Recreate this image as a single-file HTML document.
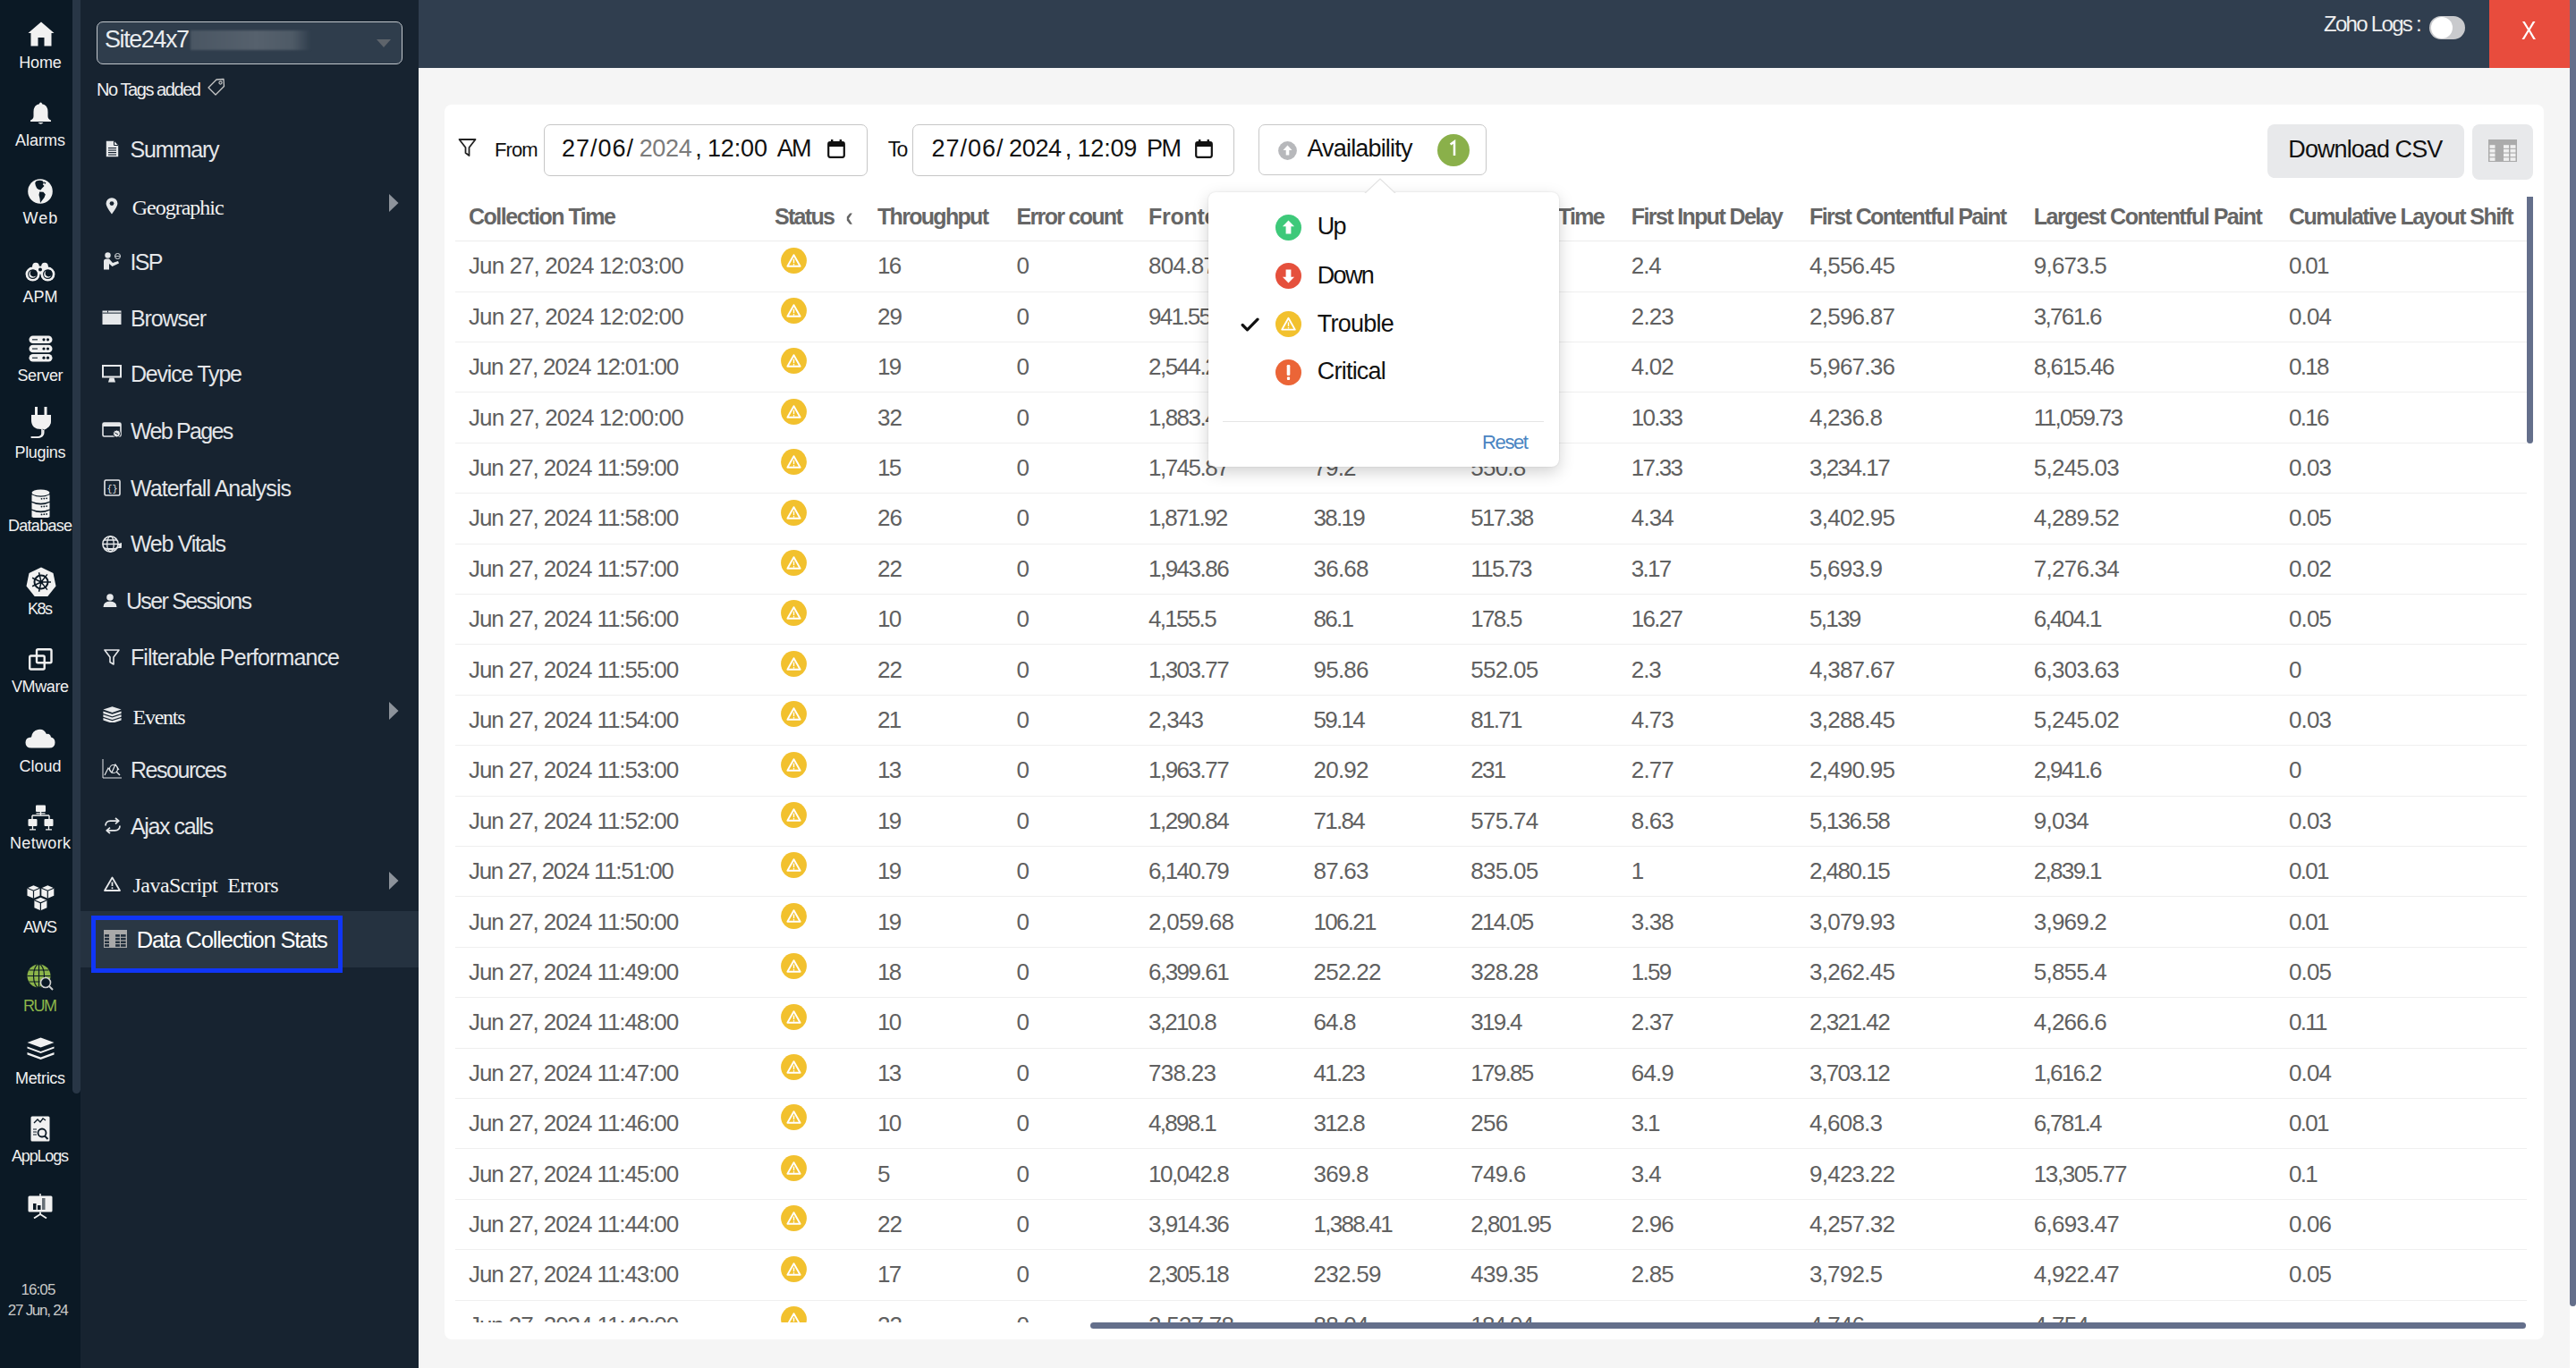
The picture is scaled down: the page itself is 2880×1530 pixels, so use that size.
<!DOCTYPE html>
<html><head><meta charset="utf-8"><title>Data Collection Stats</title>
<style>
html,body{margin:0;padding:0;}
body{width:2880px;height:1530px;overflow:hidden;position:relative;background:#f5f5f5;font-family:'Liberation Sans', sans-serif;}
.t{position:absolute;white-space:nowrap;}
</style></head><body>
<div style="position:absolute;left:0px;top:0px;width:81px;height:1530px;background:#0b1925"></div>
<div style="position:absolute;left:81px;top:0px;width:9px;height:1530px;background:#0b1925"></div>
<div style="position:absolute;left:81px;top:0px;width:9px;height:1223px;background:#283646;border-radius:0 0 5px 5px"></div>
<div style="position:absolute;left:90px;top:0px;width:378px;height:1530px;background:#172330"></div>
<div style="position:absolute;left:468px;top:0px;width:2405px;height:76px;background:#303e4f"></div>
<div style="position:absolute;left:2783px;top:0px;width:90px;height:76px;background:#e84c3d"></div>
<div style="position:absolute;left:2873px;top:0px;width:7px;height:1530px;background:#ffffff"></div>
<div style="position:absolute;left:2873px;top:0px;width:7px;height:1461px;background:#646f8b;border-radius:0 0 4px 4px"></div>
<div style="position:absolute;left:468px;top:76px;width:2405px;height:1454px;background:#f5f5f5"></div>
<div style="position:absolute;left:468px;top:76px;width:1px;height:1454px;background:#ffffff"></div>
<div style="position:absolute;left:497px;top:117px;width:2347px;height:1381px;background:#ffffff;border-radius:8px"></div>
<div style="position:absolute;left:0;top:0;width:2880px;height:1479px;overflow:hidden">
<div style="position:absolute;left:509px;top:269px;width:2316px;height:1px;background:#ececec"></div>
<div class="t" style="left:524.00px;top:230.15px;font-size:25px;line-height:25px;color:#666666;font-weight:700;font-family:'Liberation Sans', sans-serif;letter-spacing:-1.478px;">Collection Time</div>
<div class="t" style="left:866.00px;top:230.15px;font-size:25px;line-height:25px;color:#666666;font-weight:700;font-family:'Liberation Sans', sans-serif;letter-spacing:-1.700px;">Status</div>
<div class="t" style="left:981.00px;top:230.15px;font-size:25px;line-height:25px;color:#666666;font-weight:700;font-family:'Liberation Sans', sans-serif;letter-spacing:-1.693px;">Throughput</div>
<div class="t" style="left:1136.60px;top:230.15px;font-size:25px;line-height:25px;color:#666666;font-weight:700;font-family:'Liberation Sans', sans-serif;letter-spacing:-1.700px;">Error count</div>
<div class="t" style="left:1284.00px;top:230.15px;font-size:25px;line-height:25px;color:#666666;font-weight:700;font-family:'Liberation Sans', sans-serif;letter-spacing:-0.264px;">Frontend Time</div>
<div class="t" style="left:1468.50px;top:230.15px;font-size:25px;line-height:25px;color:#666666;font-weight:700;font-family:'Liberation Sans', sans-serif;letter-spacing:-1.226px;">Network Time</div>
<div class="t" style="left:1644.30px;top:230.15px;font-size:25px;line-height:25px;color:#666666;font-weight:700;font-family:'Liberation Sans', sans-serif;letter-spacing:-1.700px;">Backend Time</div>
<div class="t" style="left:1823.80px;top:230.15px;font-size:25px;line-height:25px;color:#666666;font-weight:700;font-family:'Liberation Sans', sans-serif;letter-spacing:-1.617px;">First Input Delay</div>
<div class="t" style="left:2023.00px;top:230.15px;font-size:25px;line-height:25px;color:#666666;font-weight:700;font-family:'Liberation Sans', sans-serif;letter-spacing:-1.579px;">First Contentful Paint</div>
<div class="t" style="left:2273.80px;top:230.15px;font-size:25px;line-height:25px;color:#666666;font-weight:700;font-family:'Liberation Sans', sans-serif;letter-spacing:-1.491px;">Largest Contentful Paint</div>
<div class="t" style="left:2559.00px;top:230.15px;font-size:25px;line-height:25px;color:#666666;font-weight:700;font-family:'Liberation Sans', sans-serif;letter-spacing:-1.570px;">Cumulative Layout Shift</div>
<svg style="position:absolute;left:946px;top:237px;" width="8" height="15" viewBox="0 0 8 15"><path d="M4.2 1.4 H6.9 L2.9 7.5 L6.9 13.8 H4.2 L0.8 9.5 V5.5 Z" fill="#666"/></svg>
<div style="position:absolute;left:509px;top:326px;width:2316px;height:1px;background:#efefef"></div>
<div class="t" style="left:524.00px;top:284.30px;font-size:26px;line-height:26px;color:#606060;font-weight:400;font-family:'Liberation Sans', sans-serif;letter-spacing:-0.909px;">Jun 27, 2024 12:03:00</div>
<svg style="position:absolute;left:873px;top:277px;" width="29" height="29" viewBox="0 0 29 29"><circle cx="14.5" cy="14.5" r="14.4" fill="#f2c12e"/><path d="M14.5 8.2 L21.6 20.8 L7.4 20.8 Z" fill="none" stroke="#fff" stroke-width="1.9" stroke-linejoin="round"/><path d="M14.5 12.6 V17.2" stroke="#fff" stroke-width="1.4"/><circle cx="14.5" cy="18.9" r="0.8" fill="#fff"/></svg>
<div class="t" style="left:981.00px;top:284.30px;font-size:26px;line-height:26px;color:#606060;font-weight:400;font-family:'Liberation Sans', sans-serif;letter-spacing:-1.700px;">16</div>
<div class="t" style="left:1136.60px;top:284.30px;font-size:26px;line-height:26px;color:#606060;font-weight:400;font-family:'Liberation Sans', sans-serif;letter-spacing:0px;">0</div>
<div class="t" style="left:1284.00px;top:284.30px;font-size:26px;line-height:26px;color:#606060;font-weight:400;font-family:'Liberation Sans', sans-serif;letter-spacing:-0.706px;">804.87</div>
<div class="t" style="left:1468.50px;top:284.30px;font-size:26px;line-height:26px;color:#606060;font-weight:400;font-family:'Liberation Sans', sans-serif;letter-spacing:-1.700px;">41.2</div>
<div class="t" style="left:1644.30px;top:284.30px;font-size:26px;line-height:26px;color:#606060;font-weight:400;font-family:'Liberation Sans', sans-serif;letter-spacing:-1.700px;">212.4</div>
<div class="t" style="left:1823.80px;top:284.30px;font-size:26px;line-height:26px;color:#606060;font-weight:400;font-family:'Liberation Sans', sans-serif;letter-spacing:-1.078px;">2.4</div>
<div class="t" style="left:2023.00px;top:284.30px;font-size:26px;line-height:26px;color:#606060;font-weight:400;font-family:'Liberation Sans', sans-serif;letter-spacing:-0.746px;">4,556.45</div>
<div class="t" style="left:2273.80px;top:284.30px;font-size:26px;line-height:26px;color:#606060;font-weight:400;font-family:'Liberation Sans', sans-serif;letter-spacing:-0.792px;">9,673.5</div>
<div class="t" style="left:2559.00px;top:284.30px;font-size:26px;line-height:26px;color:#606060;font-weight:400;font-family:'Liberation Sans', sans-serif;letter-spacing:-1.700px;">0.01</div>
<div style="position:absolute;left:509px;top:382px;width:2316px;height:1px;background:#efefef"></div>
<div class="t" style="left:524.00px;top:340.70px;font-size:26px;line-height:26px;color:#606060;font-weight:400;font-family:'Liberation Sans', sans-serif;letter-spacing:-0.909px;">Jun 27, 2024 12:02:00</div>
<svg style="position:absolute;left:873px;top:333px;" width="29" height="29" viewBox="0 0 29 29"><circle cx="14.5" cy="14.5" r="14.4" fill="#f2c12e"/><path d="M14.5 8.2 L21.6 20.8 L7.4 20.8 Z" fill="none" stroke="#fff" stroke-width="1.9" stroke-linejoin="round"/><path d="M14.5 12.6 V17.2" stroke="#fff" stroke-width="1.4"/><circle cx="14.5" cy="18.9" r="0.8" fill="#fff"/></svg>
<div class="t" style="left:981.00px;top:340.70px;font-size:26px;line-height:26px;color:#606060;font-weight:400;font-family:'Liberation Sans', sans-serif;letter-spacing:-0.922px;">29</div>
<div class="t" style="left:1136.60px;top:340.70px;font-size:26px;line-height:26px;color:#606060;font-weight:400;font-family:'Liberation Sans', sans-serif;letter-spacing:0px;">0</div>
<div class="t" style="left:1284.00px;top:340.70px;font-size:26px;line-height:26px;color:#606060;font-weight:400;font-family:'Liberation Sans', sans-serif;letter-spacing:-1.700px;">941.55</div>
<div class="t" style="left:1468.50px;top:340.70px;font-size:26px;line-height:26px;color:#606060;font-weight:400;font-family:'Liberation Sans', sans-serif;letter-spacing:-1.700px;">52.18</div>
<div class="t" style="left:1644.30px;top:340.70px;font-size:26px;line-height:26px;color:#606060;font-weight:400;font-family:'Liberation Sans', sans-serif;letter-spacing:-0.770px;">320.6</div>
<div class="t" style="left:1823.80px;top:340.70px;font-size:26px;line-height:26px;color:#606060;font-weight:400;font-family:'Liberation Sans', sans-serif;letter-spacing:-0.870px;">2.23</div>
<div class="t" style="left:2023.00px;top:340.70px;font-size:26px;line-height:26px;color:#606060;font-weight:400;font-family:'Liberation Sans', sans-serif;letter-spacing:-0.746px;">2,596.87</div>
<div class="t" style="left:2273.80px;top:340.70px;font-size:26px;line-height:26px;color:#606060;font-weight:400;font-family:'Liberation Sans', sans-serif;letter-spacing:-1.692px;">3,761.6</div>
<div class="t" style="left:2559.00px;top:340.70px;font-size:26px;line-height:26px;color:#606060;font-weight:400;font-family:'Liberation Sans', sans-serif;letter-spacing:-0.870px;">0.04</div>
<div style="position:absolute;left:509px;top:438px;width:2316px;height:1px;background:#efefef"></div>
<div class="t" style="left:524.00px;top:397.10px;font-size:26px;line-height:26px;color:#606060;font-weight:400;font-family:'Liberation Sans', sans-serif;letter-spacing:-1.179px;">Jun 27, 2024 12:01:00</div>
<svg style="position:absolute;left:873px;top:389px;" width="29" height="29" viewBox="0 0 29 29"><circle cx="14.5" cy="14.5" r="14.4" fill="#f2c12e"/><path d="M14.5 8.2 L21.6 20.8 L7.4 20.8 Z" fill="none" stroke="#fff" stroke-width="1.9" stroke-linejoin="round"/><path d="M14.5 12.6 V17.2" stroke="#fff" stroke-width="1.4"/><circle cx="14.5" cy="18.9" r="0.8" fill="#fff"/></svg>
<div class="t" style="left:981.00px;top:397.10px;font-size:26px;line-height:26px;color:#606060;font-weight:400;font-family:'Liberation Sans', sans-serif;letter-spacing:-1.700px;">19</div>
<div class="t" style="left:1136.60px;top:397.10px;font-size:26px;line-height:26px;color:#606060;font-weight:400;font-family:'Liberation Sans', sans-serif;letter-spacing:0px;">0</div>
<div class="t" style="left:1284.00px;top:397.10px;font-size:26px;line-height:26px;color:#606060;font-weight:400;font-family:'Liberation Sans', sans-serif;letter-spacing:-1.517px;">2,544.21</div>
<div class="t" style="left:1468.50px;top:397.10px;font-size:26px;line-height:26px;color:#606060;font-weight:400;font-family:'Liberation Sans', sans-serif;letter-spacing:-0.770px;">63.47</div>
<div class="t" style="left:1644.30px;top:397.10px;font-size:26px;line-height:26px;color:#606060;font-weight:400;font-family:'Liberation Sans', sans-serif;letter-spacing:-1.700px;">418.9</div>
<div class="t" style="left:1823.80px;top:397.10px;font-size:26px;line-height:26px;color:#606060;font-weight:400;font-family:'Liberation Sans', sans-serif;letter-spacing:-0.870px;">4.02</div>
<div class="t" style="left:2023.00px;top:397.10px;font-size:26px;line-height:26px;color:#606060;font-weight:400;font-family:'Liberation Sans', sans-serif;letter-spacing:-0.746px;">5,967.36</div>
<div class="t" style="left:2273.80px;top:397.10px;font-size:26px;line-height:26px;color:#606060;font-weight:400;font-family:'Liberation Sans', sans-serif;letter-spacing:-1.517px;">8,615.46</div>
<div class="t" style="left:2559.00px;top:397.10px;font-size:26px;line-height:26px;color:#606060;font-weight:400;font-family:'Liberation Sans', sans-serif;letter-spacing:-1.700px;">0.18</div>
<div style="position:absolute;left:509px;top:495px;width:2316px;height:1px;background:#efefef"></div>
<div class="t" style="left:524.00px;top:453.50px;font-size:26px;line-height:26px;color:#606060;font-weight:400;font-family:'Liberation Sans', sans-serif;letter-spacing:-0.909px;">Jun 27, 2024 12:00:00</div>
<svg style="position:absolute;left:873px;top:446px;" width="29" height="29" viewBox="0 0 29 29"><circle cx="14.5" cy="14.5" r="14.4" fill="#f2c12e"/><path d="M14.5 8.2 L21.6 20.8 L7.4 20.8 Z" fill="none" stroke="#fff" stroke-width="1.9" stroke-linejoin="round"/><path d="M14.5 12.6 V17.2" stroke="#fff" stroke-width="1.4"/><circle cx="14.5" cy="18.9" r="0.8" fill="#fff"/></svg>
<div class="t" style="left:981.00px;top:453.50px;font-size:26px;line-height:26px;color:#606060;font-weight:400;font-family:'Liberation Sans', sans-serif;letter-spacing:-0.922px;">32</div>
<div class="t" style="left:1136.60px;top:453.50px;font-size:26px;line-height:26px;color:#606060;font-weight:400;font-family:'Liberation Sans', sans-serif;letter-spacing:0px;">0</div>
<div class="t" style="left:1284.00px;top:453.50px;font-size:26px;line-height:26px;color:#606060;font-weight:400;font-family:'Liberation Sans', sans-serif;letter-spacing:-1.517px;">1,883.45</div>
<div class="t" style="left:1468.50px;top:453.50px;font-size:26px;line-height:26px;color:#606060;font-weight:400;font-family:'Liberation Sans', sans-serif;letter-spacing:-0.770px;">48.03</div>
<div class="t" style="left:1644.30px;top:453.50px;font-size:26px;line-height:26px;color:#606060;font-weight:400;font-family:'Liberation Sans', sans-serif;letter-spacing:-1.700px;">276.1</div>
<div class="t" style="left:1823.80px;top:453.50px;font-size:26px;line-height:26px;color:#606060;font-weight:400;font-family:'Liberation Sans', sans-serif;letter-spacing:-1.700px;">10.33</div>
<div class="t" style="left:2023.00px;top:453.50px;font-size:26px;line-height:26px;color:#606060;font-weight:400;font-family:'Liberation Sans', sans-serif;letter-spacing:-0.792px;">4,236.8</div>
<div class="t" style="left:2273.80px;top:453.50px;font-size:26px;line-height:26px;color:#606060;font-weight:400;font-family:'Liberation Sans', sans-serif;letter-spacing:-1.700px;">11,059.73</div>
<div class="t" style="left:2559.00px;top:453.50px;font-size:26px;line-height:26px;color:#606060;font-weight:400;font-family:'Liberation Sans', sans-serif;letter-spacing:-1.700px;">0.16</div>
<div style="position:absolute;left:509px;top:551px;width:2316px;height:1px;background:#efefef"></div>
<div class="t" style="left:524.00px;top:509.90px;font-size:26px;line-height:26px;color:#606060;font-weight:400;font-family:'Liberation Sans', sans-serif;letter-spacing:-1.083px;">Jun 27, 2024 11:59:00</div>
<svg style="position:absolute;left:873px;top:502px;" width="29" height="29" viewBox="0 0 29 29"><circle cx="14.5" cy="14.5" r="14.4" fill="#f2c12e"/><path d="M14.5 8.2 L21.6 20.8 L7.4 20.8 Z" fill="none" stroke="#fff" stroke-width="1.9" stroke-linejoin="round"/><path d="M14.5 12.6 V17.2" stroke="#fff" stroke-width="1.4"/><circle cx="14.5" cy="18.9" r="0.8" fill="#fff"/></svg>
<div class="t" style="left:981.00px;top:509.90px;font-size:26px;line-height:26px;color:#606060;font-weight:400;font-family:'Liberation Sans', sans-serif;letter-spacing:-1.700px;">15</div>
<div class="t" style="left:1136.60px;top:509.90px;font-size:26px;line-height:26px;color:#606060;font-weight:400;font-family:'Liberation Sans', sans-serif;letter-spacing:0px;">0</div>
<div class="t" style="left:1284.00px;top:509.90px;font-size:26px;line-height:26px;color:#606060;font-weight:400;font-family:'Liberation Sans', sans-serif;letter-spacing:-1.517px;">1,745.87</div>
<div class="t" style="left:1468.50px;top:509.90px;font-size:26px;line-height:26px;color:#606060;font-weight:400;font-family:'Liberation Sans', sans-serif;letter-spacing:-0.870px;">79.2</div>
<div class="t" style="left:1644.30px;top:509.90px;font-size:26px;line-height:26px;color:#606060;font-weight:400;font-family:'Liberation Sans', sans-serif;letter-spacing:-0.770px;">550.8</div>
<div class="t" style="left:1823.80px;top:509.90px;font-size:26px;line-height:26px;color:#606060;font-weight:400;font-family:'Liberation Sans', sans-serif;letter-spacing:-1.700px;">17.33</div>
<div class="t" style="left:2023.00px;top:509.90px;font-size:26px;line-height:26px;color:#606060;font-weight:400;font-family:'Liberation Sans', sans-serif;letter-spacing:-1.517px;">3,234.17</div>
<div class="t" style="left:2273.80px;top:509.90px;font-size:26px;line-height:26px;color:#606060;font-weight:400;font-family:'Liberation Sans', sans-serif;letter-spacing:-0.746px;">5,245.03</div>
<div class="t" style="left:2559.00px;top:509.90px;font-size:26px;line-height:26px;color:#606060;font-weight:400;font-family:'Liberation Sans', sans-serif;letter-spacing:-0.870px;">0.03</div>
<div style="position:absolute;left:509px;top:608px;width:2316px;height:1px;background:#efefef"></div>
<div class="t" style="left:524.00px;top:566.30px;font-size:26px;line-height:26px;color:#606060;font-weight:400;font-family:'Liberation Sans', sans-serif;letter-spacing:-1.083px;">Jun 27, 2024 11:58:00</div>
<svg style="position:absolute;left:873px;top:559px;" width="29" height="29" viewBox="0 0 29 29"><circle cx="14.5" cy="14.5" r="14.4" fill="#f2c12e"/><path d="M14.5 8.2 L21.6 20.8 L7.4 20.8 Z" fill="none" stroke="#fff" stroke-width="1.9" stroke-linejoin="round"/><path d="M14.5 12.6 V17.2" stroke="#fff" stroke-width="1.4"/><circle cx="14.5" cy="18.9" r="0.8" fill="#fff"/></svg>
<div class="t" style="left:981.00px;top:566.30px;font-size:26px;line-height:26px;color:#606060;font-weight:400;font-family:'Liberation Sans', sans-serif;letter-spacing:-0.922px;">26</div>
<div class="t" style="left:1136.60px;top:566.30px;font-size:26px;line-height:26px;color:#606060;font-weight:400;font-family:'Liberation Sans', sans-serif;letter-spacing:0px;">0</div>
<div class="t" style="left:1284.00px;top:566.30px;font-size:26px;line-height:26px;color:#606060;font-weight:400;font-family:'Liberation Sans', sans-serif;letter-spacing:-1.700px;">1,871.92</div>
<div class="t" style="left:1468.50px;top:566.30px;font-size:26px;line-height:26px;color:#606060;font-weight:400;font-family:'Liberation Sans', sans-serif;letter-spacing:-1.700px;">38.19</div>
<div class="t" style="left:1644.30px;top:566.30px;font-size:26px;line-height:26px;color:#606060;font-weight:400;font-family:'Liberation Sans', sans-serif;letter-spacing:-1.700px;">517.38</div>
<div class="t" style="left:1823.80px;top:566.30px;font-size:26px;line-height:26px;color:#606060;font-weight:400;font-family:'Liberation Sans', sans-serif;letter-spacing:-0.870px;">4.34</div>
<div class="t" style="left:2023.00px;top:566.30px;font-size:26px;line-height:26px;color:#606060;font-weight:400;font-family:'Liberation Sans', sans-serif;letter-spacing:-0.746px;">3,402.95</div>
<div class="t" style="left:2273.80px;top:566.30px;font-size:26px;line-height:26px;color:#606060;font-weight:400;font-family:'Liberation Sans', sans-serif;letter-spacing:-0.746px;">4,289.52</div>
<div class="t" style="left:2559.00px;top:566.30px;font-size:26px;line-height:26px;color:#606060;font-weight:400;font-family:'Liberation Sans', sans-serif;letter-spacing:-0.870px;">0.05</div>
<div style="position:absolute;left:509px;top:664px;width:2316px;height:1px;background:#efefef"></div>
<div class="t" style="left:524.00px;top:622.70px;font-size:26px;line-height:26px;color:#606060;font-weight:400;font-family:'Liberation Sans', sans-serif;letter-spacing:-1.083px;">Jun 27, 2024 11:57:00</div>
<svg style="position:absolute;left:873px;top:615px;" width="29" height="29" viewBox="0 0 29 29"><circle cx="14.5" cy="14.5" r="14.4" fill="#f2c12e"/><path d="M14.5 8.2 L21.6 20.8 L7.4 20.8 Z" fill="none" stroke="#fff" stroke-width="1.9" stroke-linejoin="round"/><path d="M14.5 12.6 V17.2" stroke="#fff" stroke-width="1.4"/><circle cx="14.5" cy="18.9" r="0.8" fill="#fff"/></svg>
<div class="t" style="left:981.00px;top:622.70px;font-size:26px;line-height:26px;color:#606060;font-weight:400;font-family:'Liberation Sans', sans-serif;letter-spacing:-0.922px;">22</div>
<div class="t" style="left:1136.60px;top:622.70px;font-size:26px;line-height:26px;color:#606060;font-weight:400;font-family:'Liberation Sans', sans-serif;letter-spacing:0px;">0</div>
<div class="t" style="left:1284.00px;top:622.70px;font-size:26px;line-height:26px;color:#606060;font-weight:400;font-family:'Liberation Sans', sans-serif;letter-spacing:-1.517px;">1,943.86</div>
<div class="t" style="left:1468.50px;top:622.70px;font-size:26px;line-height:26px;color:#606060;font-weight:400;font-family:'Liberation Sans', sans-serif;letter-spacing:-0.770px;">36.68</div>
<div class="t" style="left:1644.30px;top:622.70px;font-size:26px;line-height:26px;color:#606060;font-weight:400;font-family:'Liberation Sans', sans-serif;letter-spacing:-1.700px;">115.73</div>
<div class="t" style="left:1823.80px;top:622.70px;font-size:26px;line-height:26px;color:#606060;font-weight:400;font-family:'Liberation Sans', sans-serif;letter-spacing:-1.700px;">3.17</div>
<div class="t" style="left:2023.00px;top:622.70px;font-size:26px;line-height:26px;color:#606060;font-weight:400;font-family:'Liberation Sans', sans-serif;letter-spacing:-0.792px;">5,693.9</div>
<div class="t" style="left:2273.80px;top:622.70px;font-size:26px;line-height:26px;color:#606060;font-weight:400;font-family:'Liberation Sans', sans-serif;letter-spacing:-0.746px;">7,276.34</div>
<div class="t" style="left:2559.00px;top:622.70px;font-size:26px;line-height:26px;color:#606060;font-weight:400;font-family:'Liberation Sans', sans-serif;letter-spacing:-0.870px;">0.02</div>
<div style="position:absolute;left:509px;top:720px;width:2316px;height:1px;background:#efefef"></div>
<div class="t" style="left:524.00px;top:679.10px;font-size:26px;line-height:26px;color:#606060;font-weight:400;font-family:'Liberation Sans', sans-serif;letter-spacing:-1.083px;">Jun 27, 2024 11:56:00</div>
<svg style="position:absolute;left:873px;top:671px;" width="29" height="29" viewBox="0 0 29 29"><circle cx="14.5" cy="14.5" r="14.4" fill="#f2c12e"/><path d="M14.5 8.2 L21.6 20.8 L7.4 20.8 Z" fill="none" stroke="#fff" stroke-width="1.9" stroke-linejoin="round"/><path d="M14.5 12.6 V17.2" stroke="#fff" stroke-width="1.4"/><circle cx="14.5" cy="18.9" r="0.8" fill="#fff"/></svg>
<div class="t" style="left:981.00px;top:679.10px;font-size:26px;line-height:26px;color:#606060;font-weight:400;font-family:'Liberation Sans', sans-serif;letter-spacing:-1.700px;">10</div>
<div class="t" style="left:1136.60px;top:679.10px;font-size:26px;line-height:26px;color:#606060;font-weight:400;font-family:'Liberation Sans', sans-serif;letter-spacing:0px;">0</div>
<div class="t" style="left:1284.00px;top:679.10px;font-size:26px;line-height:26px;color:#606060;font-weight:400;font-family:'Liberation Sans', sans-serif;letter-spacing:-1.692px;">4,155.5</div>
<div class="t" style="left:1468.50px;top:679.10px;font-size:26px;line-height:26px;color:#606060;font-weight:400;font-family:'Liberation Sans', sans-serif;letter-spacing:-1.700px;">86.1</div>
<div class="t" style="left:1644.30px;top:679.10px;font-size:26px;line-height:26px;color:#606060;font-weight:400;font-family:'Liberation Sans', sans-serif;letter-spacing:-1.700px;">178.5</div>
<div class="t" style="left:1823.80px;top:679.10px;font-size:26px;line-height:26px;color:#606060;font-weight:400;font-family:'Liberation Sans', sans-serif;letter-spacing:-1.700px;">16.27</div>
<div class="t" style="left:2023.00px;top:679.10px;font-size:26px;line-height:26px;color:#606060;font-weight:400;font-family:'Liberation Sans', sans-serif;letter-spacing:-1.700px;">5,139</div>
<div class="t" style="left:2273.80px;top:679.10px;font-size:26px;line-height:26px;color:#606060;font-weight:400;font-family:'Liberation Sans', sans-serif;letter-spacing:-1.692px;">6,404.1</div>
<div class="t" style="left:2559.00px;top:679.10px;font-size:26px;line-height:26px;color:#606060;font-weight:400;font-family:'Liberation Sans', sans-serif;letter-spacing:-0.870px;">0.05</div>
<div style="position:absolute;left:509px;top:777px;width:2316px;height:1px;background:#efefef"></div>
<div class="t" style="left:524.00px;top:735.50px;font-size:26px;line-height:26px;color:#606060;font-weight:400;font-family:'Liberation Sans', sans-serif;letter-spacing:-1.083px;">Jun 27, 2024 11:55:00</div>
<svg style="position:absolute;left:873px;top:728px;" width="29" height="29" viewBox="0 0 29 29"><circle cx="14.5" cy="14.5" r="14.4" fill="#f2c12e"/><path d="M14.5 8.2 L21.6 20.8 L7.4 20.8 Z" fill="none" stroke="#fff" stroke-width="1.9" stroke-linejoin="round"/><path d="M14.5 12.6 V17.2" stroke="#fff" stroke-width="1.4"/><circle cx="14.5" cy="18.9" r="0.8" fill="#fff"/></svg>
<div class="t" style="left:981.00px;top:735.50px;font-size:26px;line-height:26px;color:#606060;font-weight:400;font-family:'Liberation Sans', sans-serif;letter-spacing:-0.922px;">22</div>
<div class="t" style="left:1136.60px;top:735.50px;font-size:26px;line-height:26px;color:#606060;font-weight:400;font-family:'Liberation Sans', sans-serif;letter-spacing:0px;">0</div>
<div class="t" style="left:1284.00px;top:735.50px;font-size:26px;line-height:26px;color:#606060;font-weight:400;font-family:'Liberation Sans', sans-serif;letter-spacing:-1.517px;">1,303.77</div>
<div class="t" style="left:1468.50px;top:735.50px;font-size:26px;line-height:26px;color:#606060;font-weight:400;font-family:'Liberation Sans', sans-serif;letter-spacing:-0.770px;">95.86</div>
<div class="t" style="left:1644.30px;top:735.50px;font-size:26px;line-height:26px;color:#606060;font-weight:400;font-family:'Liberation Sans', sans-serif;letter-spacing:-0.706px;">552.05</div>
<div class="t" style="left:1823.80px;top:735.50px;font-size:26px;line-height:26px;color:#606060;font-weight:400;font-family:'Liberation Sans', sans-serif;letter-spacing:-1.078px;">2.3</div>
<div class="t" style="left:2023.00px;top:735.50px;font-size:26px;line-height:26px;color:#606060;font-weight:400;font-family:'Liberation Sans', sans-serif;letter-spacing:-0.746px;">4,387.67</div>
<div class="t" style="left:2273.80px;top:735.50px;font-size:26px;line-height:26px;color:#606060;font-weight:400;font-family:'Liberation Sans', sans-serif;letter-spacing:-0.746px;">6,303.63</div>
<div class="t" style="left:2559.00px;top:735.50px;font-size:26px;line-height:26px;color:#606060;font-weight:400;font-family:'Liberation Sans', sans-serif;letter-spacing:0px;">0</div>
<div style="position:absolute;left:509px;top:833px;width:2316px;height:1px;background:#efefef"></div>
<div class="t" style="left:524.00px;top:791.90px;font-size:26px;line-height:26px;color:#606060;font-weight:400;font-family:'Liberation Sans', sans-serif;letter-spacing:-1.083px;">Jun 27, 2024 11:54:00</div>
<svg style="position:absolute;left:873px;top:784px;" width="29" height="29" viewBox="0 0 29 29"><circle cx="14.5" cy="14.5" r="14.4" fill="#f2c12e"/><path d="M14.5 8.2 L21.6 20.8 L7.4 20.8 Z" fill="none" stroke="#fff" stroke-width="1.9" stroke-linejoin="round"/><path d="M14.5 12.6 V17.2" stroke="#fff" stroke-width="1.4"/><circle cx="14.5" cy="18.9" r="0.8" fill="#fff"/></svg>
<div class="t" style="left:981.00px;top:791.90px;font-size:26px;line-height:26px;color:#606060;font-weight:400;font-family:'Liberation Sans', sans-serif;letter-spacing:-1.700px;">21</div>
<div class="t" style="left:1136.60px;top:791.90px;font-size:26px;line-height:26px;color:#606060;font-weight:400;font-family:'Liberation Sans', sans-serif;letter-spacing:0px;">0</div>
<div class="t" style="left:1284.00px;top:791.90px;font-size:26px;line-height:26px;color:#606060;font-weight:400;font-family:'Liberation Sans', sans-serif;letter-spacing:-0.770px;">2,343</div>
<div class="t" style="left:1468.50px;top:791.90px;font-size:26px;line-height:26px;color:#606060;font-weight:400;font-family:'Liberation Sans', sans-serif;letter-spacing:-1.700px;">59.14</div>
<div class="t" style="left:1644.30px;top:791.90px;font-size:26px;line-height:26px;color:#606060;font-weight:400;font-family:'Liberation Sans', sans-serif;letter-spacing:-1.700px;">81.71</div>
<div class="t" style="left:1823.80px;top:791.90px;font-size:26px;line-height:26px;color:#606060;font-weight:400;font-family:'Liberation Sans', sans-serif;letter-spacing:-0.870px;">4.73</div>
<div class="t" style="left:2023.00px;top:791.90px;font-size:26px;line-height:26px;color:#606060;font-weight:400;font-family:'Liberation Sans', sans-serif;letter-spacing:-0.746px;">3,288.45</div>
<div class="t" style="left:2273.80px;top:791.90px;font-size:26px;line-height:26px;color:#606060;font-weight:400;font-family:'Liberation Sans', sans-serif;letter-spacing:-0.746px;">5,245.02</div>
<div class="t" style="left:2559.00px;top:791.90px;font-size:26px;line-height:26px;color:#606060;font-weight:400;font-family:'Liberation Sans', sans-serif;letter-spacing:-0.870px;">0.03</div>
<div style="position:absolute;left:509px;top:890px;width:2316px;height:1px;background:#efefef"></div>
<div class="t" style="left:524.00px;top:848.30px;font-size:26px;line-height:26px;color:#606060;font-weight:400;font-family:'Liberation Sans', sans-serif;letter-spacing:-1.083px;">Jun 27, 2024 11:53:00</div>
<svg style="position:absolute;left:873px;top:841px;" width="29" height="29" viewBox="0 0 29 29"><circle cx="14.5" cy="14.5" r="14.4" fill="#f2c12e"/><path d="M14.5 8.2 L21.6 20.8 L7.4 20.8 Z" fill="none" stroke="#fff" stroke-width="1.9" stroke-linejoin="round"/><path d="M14.5 12.6 V17.2" stroke="#fff" stroke-width="1.4"/><circle cx="14.5" cy="18.9" r="0.8" fill="#fff"/></svg>
<div class="t" style="left:981.00px;top:848.30px;font-size:26px;line-height:26px;color:#606060;font-weight:400;font-family:'Liberation Sans', sans-serif;letter-spacing:-1.700px;">13</div>
<div class="t" style="left:1136.60px;top:848.30px;font-size:26px;line-height:26px;color:#606060;font-weight:400;font-family:'Liberation Sans', sans-serif;letter-spacing:0px;">0</div>
<div class="t" style="left:1284.00px;top:848.30px;font-size:26px;line-height:26px;color:#606060;font-weight:400;font-family:'Liberation Sans', sans-serif;letter-spacing:-1.517px;">1,963.77</div>
<div class="t" style="left:1468.50px;top:848.30px;font-size:26px;line-height:26px;color:#606060;font-weight:400;font-family:'Liberation Sans', sans-serif;letter-spacing:-0.770px;">20.92</div>
<div class="t" style="left:1644.30px;top:848.30px;font-size:26px;line-height:26px;color:#606060;font-weight:400;font-family:'Liberation Sans', sans-serif;letter-spacing:-1.700px;">231</div>
<div class="t" style="left:1823.80px;top:848.30px;font-size:26px;line-height:26px;color:#606060;font-weight:400;font-family:'Liberation Sans', sans-serif;letter-spacing:-0.870px;">2.77</div>
<div class="t" style="left:2023.00px;top:848.30px;font-size:26px;line-height:26px;color:#606060;font-weight:400;font-family:'Liberation Sans', sans-serif;letter-spacing:-0.746px;">2,490.95</div>
<div class="t" style="left:2273.80px;top:848.30px;font-size:26px;line-height:26px;color:#606060;font-weight:400;font-family:'Liberation Sans', sans-serif;letter-spacing:-1.692px;">2,941.6</div>
<div class="t" style="left:2559.00px;top:848.30px;font-size:26px;line-height:26px;color:#606060;font-weight:400;font-family:'Liberation Sans', sans-serif;letter-spacing:0px;">0</div>
<div style="position:absolute;left:509px;top:946px;width:2316px;height:1px;background:#efefef"></div>
<div class="t" style="left:524.00px;top:904.70px;font-size:26px;line-height:26px;color:#606060;font-weight:400;font-family:'Liberation Sans', sans-serif;letter-spacing:-1.083px;">Jun 27, 2024 11:52:00</div>
<svg style="position:absolute;left:873px;top:897px;" width="29" height="29" viewBox="0 0 29 29"><circle cx="14.5" cy="14.5" r="14.4" fill="#f2c12e"/><path d="M14.5 8.2 L21.6 20.8 L7.4 20.8 Z" fill="none" stroke="#fff" stroke-width="1.9" stroke-linejoin="round"/><path d="M14.5 12.6 V17.2" stroke="#fff" stroke-width="1.4"/><circle cx="14.5" cy="18.9" r="0.8" fill="#fff"/></svg>
<div class="t" style="left:981.00px;top:904.70px;font-size:26px;line-height:26px;color:#606060;font-weight:400;font-family:'Liberation Sans', sans-serif;letter-spacing:-1.700px;">19</div>
<div class="t" style="left:1136.60px;top:904.70px;font-size:26px;line-height:26px;color:#606060;font-weight:400;font-family:'Liberation Sans', sans-serif;letter-spacing:0px;">0</div>
<div class="t" style="left:1284.00px;top:904.70px;font-size:26px;line-height:26px;color:#606060;font-weight:400;font-family:'Liberation Sans', sans-serif;letter-spacing:-1.517px;">1,290.84</div>
<div class="t" style="left:1468.50px;top:904.70px;font-size:26px;line-height:26px;color:#606060;font-weight:400;font-family:'Liberation Sans', sans-serif;letter-spacing:-1.700px;">71.84</div>
<div class="t" style="left:1644.30px;top:904.70px;font-size:26px;line-height:26px;color:#606060;font-weight:400;font-family:'Liberation Sans', sans-serif;letter-spacing:-0.706px;">575.74</div>
<div class="t" style="left:1823.80px;top:904.70px;font-size:26px;line-height:26px;color:#606060;font-weight:400;font-family:'Liberation Sans', sans-serif;letter-spacing:-0.870px;">8.63</div>
<div class="t" style="left:2023.00px;top:904.70px;font-size:26px;line-height:26px;color:#606060;font-weight:400;font-family:'Liberation Sans', sans-serif;letter-spacing:-1.517px;">5,136.58</div>
<div class="t" style="left:2273.80px;top:904.70px;font-size:26px;line-height:26px;color:#606060;font-weight:400;font-family:'Liberation Sans', sans-serif;letter-spacing:-0.770px;">9,034</div>
<div class="t" style="left:2559.00px;top:904.70px;font-size:26px;line-height:26px;color:#606060;font-weight:400;font-family:'Liberation Sans', sans-serif;letter-spacing:-0.870px;">0.03</div>
<div style="position:absolute;left:509px;top:1002px;width:2316px;height:1px;background:#efefef"></div>
<div class="t" style="left:524.00px;top:961.10px;font-size:26px;line-height:26px;color:#606060;font-weight:400;font-family:'Liberation Sans', sans-serif;letter-spacing:-1.353px;">Jun 27, 2024 11:51:00</div>
<svg style="position:absolute;left:873px;top:953px;" width="29" height="29" viewBox="0 0 29 29"><circle cx="14.5" cy="14.5" r="14.4" fill="#f2c12e"/><path d="M14.5 8.2 L21.6 20.8 L7.4 20.8 Z" fill="none" stroke="#fff" stroke-width="1.9" stroke-linejoin="round"/><path d="M14.5 12.6 V17.2" stroke="#fff" stroke-width="1.4"/><circle cx="14.5" cy="18.9" r="0.8" fill="#fff"/></svg>
<div class="t" style="left:981.00px;top:961.10px;font-size:26px;line-height:26px;color:#606060;font-weight:400;font-family:'Liberation Sans', sans-serif;letter-spacing:-1.700px;">19</div>
<div class="t" style="left:1136.60px;top:961.10px;font-size:26px;line-height:26px;color:#606060;font-weight:400;font-family:'Liberation Sans', sans-serif;letter-spacing:0px;">0</div>
<div class="t" style="left:1284.00px;top:961.10px;font-size:26px;line-height:26px;color:#606060;font-weight:400;font-family:'Liberation Sans', sans-serif;letter-spacing:-1.517px;">6,140.79</div>
<div class="t" style="left:1468.50px;top:961.10px;font-size:26px;line-height:26px;color:#606060;font-weight:400;font-family:'Liberation Sans', sans-serif;letter-spacing:-0.770px;">87.63</div>
<div class="t" style="left:1644.30px;top:961.10px;font-size:26px;line-height:26px;color:#606060;font-weight:400;font-family:'Liberation Sans', sans-serif;letter-spacing:-0.706px;">835.05</div>
<div class="t" style="left:1823.80px;top:961.10px;font-size:26px;line-height:26px;color:#606060;font-weight:400;font-family:'Liberation Sans', sans-serif;letter-spacing:0px;">1</div>
<div class="t" style="left:2023.00px;top:961.10px;font-size:26px;line-height:26px;color:#606060;font-weight:400;font-family:'Liberation Sans', sans-serif;letter-spacing:-1.517px;">2,480.15</div>
<div class="t" style="left:2273.80px;top:961.10px;font-size:26px;line-height:26px;color:#606060;font-weight:400;font-family:'Liberation Sans', sans-serif;letter-spacing:-1.692px;">2,839.1</div>
<div class="t" style="left:2559.00px;top:961.10px;font-size:26px;line-height:26px;color:#606060;font-weight:400;font-family:'Liberation Sans', sans-serif;letter-spacing:-1.700px;">0.01</div>
<div style="position:absolute;left:509px;top:1059px;width:2316px;height:1px;background:#efefef"></div>
<div class="t" style="left:524.00px;top:1017.50px;font-size:26px;line-height:26px;color:#606060;font-weight:400;font-family:'Liberation Sans', sans-serif;letter-spacing:-1.083px;">Jun 27, 2024 11:50:00</div>
<svg style="position:absolute;left:873px;top:1010px;" width="29" height="29" viewBox="0 0 29 29"><circle cx="14.5" cy="14.5" r="14.4" fill="#f2c12e"/><path d="M14.5 8.2 L21.6 20.8 L7.4 20.8 Z" fill="none" stroke="#fff" stroke-width="1.9" stroke-linejoin="round"/><path d="M14.5 12.6 V17.2" stroke="#fff" stroke-width="1.4"/><circle cx="14.5" cy="18.9" r="0.8" fill="#fff"/></svg>
<div class="t" style="left:981.00px;top:1017.50px;font-size:26px;line-height:26px;color:#606060;font-weight:400;font-family:'Liberation Sans', sans-serif;letter-spacing:-1.700px;">19</div>
<div class="t" style="left:1136.60px;top:1017.50px;font-size:26px;line-height:26px;color:#606060;font-weight:400;font-family:'Liberation Sans', sans-serif;letter-spacing:0px;">0</div>
<div class="t" style="left:1284.00px;top:1017.50px;font-size:26px;line-height:26px;color:#606060;font-weight:400;font-family:'Liberation Sans', sans-serif;letter-spacing:-0.746px;">2,059.68</div>
<div class="t" style="left:1468.50px;top:1017.50px;font-size:26px;line-height:26px;color:#606060;font-weight:400;font-family:'Liberation Sans', sans-serif;letter-spacing:-1.700px;">106.21</div>
<div class="t" style="left:1644.30px;top:1017.50px;font-size:26px;line-height:26px;color:#606060;font-weight:400;font-family:'Liberation Sans', sans-serif;letter-spacing:-1.700px;">214.05</div>
<div class="t" style="left:1823.80px;top:1017.50px;font-size:26px;line-height:26px;color:#606060;font-weight:400;font-family:'Liberation Sans', sans-serif;letter-spacing:-0.870px;">3.38</div>
<div class="t" style="left:2023.00px;top:1017.50px;font-size:26px;line-height:26px;color:#606060;font-weight:400;font-family:'Liberation Sans', sans-serif;letter-spacing:-0.746px;">3,079.93</div>
<div class="t" style="left:2273.80px;top:1017.50px;font-size:26px;line-height:26px;color:#606060;font-weight:400;font-family:'Liberation Sans', sans-serif;letter-spacing:-0.792px;">3,969.2</div>
<div class="t" style="left:2559.00px;top:1017.50px;font-size:26px;line-height:26px;color:#606060;font-weight:400;font-family:'Liberation Sans', sans-serif;letter-spacing:-1.700px;">0.01</div>
<div style="position:absolute;left:509px;top:1115px;width:2316px;height:1px;background:#efefef"></div>
<div class="t" style="left:524.00px;top:1073.90px;font-size:26px;line-height:26px;color:#606060;font-weight:400;font-family:'Liberation Sans', sans-serif;letter-spacing:-1.083px;">Jun 27, 2024 11:49:00</div>
<svg style="position:absolute;left:873px;top:1066px;" width="29" height="29" viewBox="0 0 29 29"><circle cx="14.5" cy="14.5" r="14.4" fill="#f2c12e"/><path d="M14.5 8.2 L21.6 20.8 L7.4 20.8 Z" fill="none" stroke="#fff" stroke-width="1.9" stroke-linejoin="round"/><path d="M14.5 12.6 V17.2" stroke="#fff" stroke-width="1.4"/><circle cx="14.5" cy="18.9" r="0.8" fill="#fff"/></svg>
<div class="t" style="left:981.00px;top:1073.90px;font-size:26px;line-height:26px;color:#606060;font-weight:400;font-family:'Liberation Sans', sans-serif;letter-spacing:-1.700px;">18</div>
<div class="t" style="left:1136.60px;top:1073.90px;font-size:26px;line-height:26px;color:#606060;font-weight:400;font-family:'Liberation Sans', sans-serif;letter-spacing:0px;">0</div>
<div class="t" style="left:1284.00px;top:1073.90px;font-size:26px;line-height:26px;color:#606060;font-weight:400;font-family:'Liberation Sans', sans-serif;letter-spacing:-1.517px;">6,399.61</div>
<div class="t" style="left:1468.50px;top:1073.90px;font-size:26px;line-height:26px;color:#606060;font-weight:400;font-family:'Liberation Sans', sans-serif;letter-spacing:-0.706px;">252.22</div>
<div class="t" style="left:1644.30px;top:1073.90px;font-size:26px;line-height:26px;color:#606060;font-weight:400;font-family:'Liberation Sans', sans-serif;letter-spacing:-0.706px;">328.28</div>
<div class="t" style="left:1823.80px;top:1073.90px;font-size:26px;line-height:26px;color:#606060;font-weight:400;font-family:'Liberation Sans', sans-serif;letter-spacing:-1.700px;">1.59</div>
<div class="t" style="left:2023.00px;top:1073.90px;font-size:26px;line-height:26px;color:#606060;font-weight:400;font-family:'Liberation Sans', sans-serif;letter-spacing:-0.746px;">3,262.45</div>
<div class="t" style="left:2273.80px;top:1073.90px;font-size:26px;line-height:26px;color:#606060;font-weight:400;font-family:'Liberation Sans', sans-serif;letter-spacing:-0.792px;">5,855.4</div>
<div class="t" style="left:2559.00px;top:1073.90px;font-size:26px;line-height:26px;color:#606060;font-weight:400;font-family:'Liberation Sans', sans-serif;letter-spacing:-0.870px;">0.05</div>
<div style="position:absolute;left:509px;top:1172px;width:2316px;height:1px;background:#efefef"></div>
<div class="t" style="left:524.00px;top:1130.30px;font-size:26px;line-height:26px;color:#606060;font-weight:400;font-family:'Liberation Sans', sans-serif;letter-spacing:-1.083px;">Jun 27, 2024 11:48:00</div>
<svg style="position:absolute;left:873px;top:1123px;" width="29" height="29" viewBox="0 0 29 29"><circle cx="14.5" cy="14.5" r="14.4" fill="#f2c12e"/><path d="M14.5 8.2 L21.6 20.8 L7.4 20.8 Z" fill="none" stroke="#fff" stroke-width="1.9" stroke-linejoin="round"/><path d="M14.5 12.6 V17.2" stroke="#fff" stroke-width="1.4"/><circle cx="14.5" cy="18.9" r="0.8" fill="#fff"/></svg>
<div class="t" style="left:981.00px;top:1130.30px;font-size:26px;line-height:26px;color:#606060;font-weight:400;font-family:'Liberation Sans', sans-serif;letter-spacing:-1.700px;">10</div>
<div class="t" style="left:1136.60px;top:1130.30px;font-size:26px;line-height:26px;color:#606060;font-weight:400;font-family:'Liberation Sans', sans-serif;letter-spacing:0px;">0</div>
<div class="t" style="left:1284.00px;top:1130.30px;font-size:26px;line-height:26px;color:#606060;font-weight:400;font-family:'Liberation Sans', sans-serif;letter-spacing:-1.692px;">3,210.8</div>
<div class="t" style="left:1468.50px;top:1130.30px;font-size:26px;line-height:26px;color:#606060;font-weight:400;font-family:'Liberation Sans', sans-serif;letter-spacing:-0.870px;">64.8</div>
<div class="t" style="left:1644.30px;top:1130.30px;font-size:26px;line-height:26px;color:#606060;font-weight:400;font-family:'Liberation Sans', sans-serif;letter-spacing:-1.700px;">319.4</div>
<div class="t" style="left:1823.80px;top:1130.30px;font-size:26px;line-height:26px;color:#606060;font-weight:400;font-family:'Liberation Sans', sans-serif;letter-spacing:-0.870px;">2.37</div>
<div class="t" style="left:2023.00px;top:1130.30px;font-size:26px;line-height:26px;color:#606060;font-weight:400;font-family:'Liberation Sans', sans-serif;letter-spacing:-1.517px;">2,321.42</div>
<div class="t" style="left:2273.80px;top:1130.30px;font-size:26px;line-height:26px;color:#606060;font-weight:400;font-family:'Liberation Sans', sans-serif;letter-spacing:-0.792px;">4,266.6</div>
<div class="t" style="left:2559.00px;top:1130.30px;font-size:26px;line-height:26px;color:#606060;font-weight:400;font-family:'Liberation Sans', sans-serif;letter-spacing:-1.700px;">0.11</div>
<div style="position:absolute;left:509px;top:1228px;width:2316px;height:1px;background:#efefef"></div>
<div class="t" style="left:524.00px;top:1186.70px;font-size:26px;line-height:26px;color:#606060;font-weight:400;font-family:'Liberation Sans', sans-serif;letter-spacing:-1.083px;">Jun 27, 2024 11:47:00</div>
<svg style="position:absolute;left:873px;top:1179px;" width="29" height="29" viewBox="0 0 29 29"><circle cx="14.5" cy="14.5" r="14.4" fill="#f2c12e"/><path d="M14.5 8.2 L21.6 20.8 L7.4 20.8 Z" fill="none" stroke="#fff" stroke-width="1.9" stroke-linejoin="round"/><path d="M14.5 12.6 V17.2" stroke="#fff" stroke-width="1.4"/><circle cx="14.5" cy="18.9" r="0.8" fill="#fff"/></svg>
<div class="t" style="left:981.00px;top:1186.70px;font-size:26px;line-height:26px;color:#606060;font-weight:400;font-family:'Liberation Sans', sans-serif;letter-spacing:-1.700px;">13</div>
<div class="t" style="left:1136.60px;top:1186.70px;font-size:26px;line-height:26px;color:#606060;font-weight:400;font-family:'Liberation Sans', sans-serif;letter-spacing:0px;">0</div>
<div class="t" style="left:1284.00px;top:1186.70px;font-size:26px;line-height:26px;color:#606060;font-weight:400;font-family:'Liberation Sans', sans-serif;letter-spacing:-0.706px;">738.23</div>
<div class="t" style="left:1468.50px;top:1186.70px;font-size:26px;line-height:26px;color:#606060;font-weight:400;font-family:'Liberation Sans', sans-serif;letter-spacing:-1.700px;">41.23</div>
<div class="t" style="left:1644.30px;top:1186.70px;font-size:26px;line-height:26px;color:#606060;font-weight:400;font-family:'Liberation Sans', sans-serif;letter-spacing:-1.700px;">179.85</div>
<div class="t" style="left:1823.80px;top:1186.70px;font-size:26px;line-height:26px;color:#606060;font-weight:400;font-family:'Liberation Sans', sans-serif;letter-spacing:-0.870px;">64.9</div>
<div class="t" style="left:2023.00px;top:1186.70px;font-size:26px;line-height:26px;color:#606060;font-weight:400;font-family:'Liberation Sans', sans-serif;letter-spacing:-1.517px;">3,703.12</div>
<div class="t" style="left:2273.80px;top:1186.70px;font-size:26px;line-height:26px;color:#606060;font-weight:400;font-family:'Liberation Sans', sans-serif;letter-spacing:-1.700px;">1,616.2</div>
<div class="t" style="left:2559.00px;top:1186.70px;font-size:26px;line-height:26px;color:#606060;font-weight:400;font-family:'Liberation Sans', sans-serif;letter-spacing:-0.870px;">0.04</div>
<div style="position:absolute;left:509px;top:1284px;width:2316px;height:1px;background:#efefef"></div>
<div class="t" style="left:524.00px;top:1243.10px;font-size:26px;line-height:26px;color:#606060;font-weight:400;font-family:'Liberation Sans', sans-serif;letter-spacing:-1.083px;">Jun 27, 2024 11:46:00</div>
<svg style="position:absolute;left:873px;top:1235px;" width="29" height="29" viewBox="0 0 29 29"><circle cx="14.5" cy="14.5" r="14.4" fill="#f2c12e"/><path d="M14.5 8.2 L21.6 20.8 L7.4 20.8 Z" fill="none" stroke="#fff" stroke-width="1.9" stroke-linejoin="round"/><path d="M14.5 12.6 V17.2" stroke="#fff" stroke-width="1.4"/><circle cx="14.5" cy="18.9" r="0.8" fill="#fff"/></svg>
<div class="t" style="left:981.00px;top:1243.10px;font-size:26px;line-height:26px;color:#606060;font-weight:400;font-family:'Liberation Sans', sans-serif;letter-spacing:-1.700px;">10</div>
<div class="t" style="left:1136.60px;top:1243.10px;font-size:26px;line-height:26px;color:#606060;font-weight:400;font-family:'Liberation Sans', sans-serif;letter-spacing:0px;">0</div>
<div class="t" style="left:1284.00px;top:1243.10px;font-size:26px;line-height:26px;color:#606060;font-weight:400;font-family:'Liberation Sans', sans-serif;letter-spacing:-1.692px;">4,898.1</div>
<div class="t" style="left:1468.50px;top:1243.10px;font-size:26px;line-height:26px;color:#606060;font-weight:400;font-family:'Liberation Sans', sans-serif;letter-spacing:-1.700px;">312.8</div>
<div class="t" style="left:1644.30px;top:1243.10px;font-size:26px;line-height:26px;color:#606060;font-weight:400;font-family:'Liberation Sans', sans-serif;letter-spacing:-0.695px;">256</div>
<div class="t" style="left:1823.80px;top:1243.10px;font-size:26px;line-height:26px;color:#606060;font-weight:400;font-family:'Liberation Sans', sans-serif;letter-spacing:-1.700px;">3.1</div>
<div class="t" style="left:2023.00px;top:1243.10px;font-size:26px;line-height:26px;color:#606060;font-weight:400;font-family:'Liberation Sans', sans-serif;letter-spacing:-0.792px;">4,608.3</div>
<div class="t" style="left:2273.80px;top:1243.10px;font-size:26px;line-height:26px;color:#606060;font-weight:400;font-family:'Liberation Sans', sans-serif;letter-spacing:-1.692px;">6,781.4</div>
<div class="t" style="left:2559.00px;top:1243.10px;font-size:26px;line-height:26px;color:#606060;font-weight:400;font-family:'Liberation Sans', sans-serif;letter-spacing:-1.700px;">0.01</div>
<div style="position:absolute;left:509px;top:1341px;width:2316px;height:1px;background:#efefef"></div>
<div class="t" style="left:524.00px;top:1299.50px;font-size:26px;line-height:26px;color:#606060;font-weight:400;font-family:'Liberation Sans', sans-serif;letter-spacing:-1.083px;">Jun 27, 2024 11:45:00</div>
<svg style="position:absolute;left:873px;top:1292px;" width="29" height="29" viewBox="0 0 29 29"><circle cx="14.5" cy="14.5" r="14.4" fill="#f2c12e"/><path d="M14.5 8.2 L21.6 20.8 L7.4 20.8 Z" fill="none" stroke="#fff" stroke-width="1.9" stroke-linejoin="round"/><path d="M14.5 12.6 V17.2" stroke="#fff" stroke-width="1.4"/><circle cx="14.5" cy="18.9" r="0.8" fill="#fff"/></svg>
<div class="t" style="left:981.00px;top:1299.50px;font-size:26px;line-height:26px;color:#606060;font-weight:400;font-family:'Liberation Sans', sans-serif;letter-spacing:0px;">5</div>
<div class="t" style="left:1136.60px;top:1299.50px;font-size:26px;line-height:26px;color:#606060;font-weight:400;font-family:'Liberation Sans', sans-serif;letter-spacing:0px;">0</div>
<div class="t" style="left:1284.00px;top:1299.50px;font-size:26px;line-height:26px;color:#606060;font-weight:400;font-family:'Liberation Sans', sans-serif;letter-spacing:-1.517px;">10,042.8</div>
<div class="t" style="left:1468.50px;top:1299.50px;font-size:26px;line-height:26px;color:#606060;font-weight:400;font-family:'Liberation Sans', sans-serif;letter-spacing:-0.770px;">369.8</div>
<div class="t" style="left:1644.30px;top:1299.50px;font-size:26px;line-height:26px;color:#606060;font-weight:400;font-family:'Liberation Sans', sans-serif;letter-spacing:-0.770px;">749.6</div>
<div class="t" style="left:1823.80px;top:1299.50px;font-size:26px;line-height:26px;color:#606060;font-weight:400;font-family:'Liberation Sans', sans-serif;letter-spacing:-1.078px;">3.4</div>
<div class="t" style="left:2023.00px;top:1299.50px;font-size:26px;line-height:26px;color:#606060;font-weight:400;font-family:'Liberation Sans', sans-serif;letter-spacing:-0.746px;">9,423.22</div>
<div class="t" style="left:2273.80px;top:1299.50px;font-size:26px;line-height:26px;color:#606060;font-weight:400;font-family:'Liberation Sans', sans-serif;letter-spacing:-1.384px;">13,305.77</div>
<div class="t" style="left:2559.00px;top:1299.50px;font-size:26px;line-height:26px;color:#606060;font-weight:400;font-family:'Liberation Sans', sans-serif;letter-spacing:-1.700px;">0.1</div>
<div style="position:absolute;left:509px;top:1397px;width:2316px;height:1px;background:#efefef"></div>
<div class="t" style="left:524.00px;top:1355.90px;font-size:26px;line-height:26px;color:#606060;font-weight:400;font-family:'Liberation Sans', sans-serif;letter-spacing:-1.083px;">Jun 27, 2024 11:44:00</div>
<svg style="position:absolute;left:873px;top:1348px;" width="29" height="29" viewBox="0 0 29 29"><circle cx="14.5" cy="14.5" r="14.4" fill="#f2c12e"/><path d="M14.5 8.2 L21.6 20.8 L7.4 20.8 Z" fill="none" stroke="#fff" stroke-width="1.9" stroke-linejoin="round"/><path d="M14.5 12.6 V17.2" stroke="#fff" stroke-width="1.4"/><circle cx="14.5" cy="18.9" r="0.8" fill="#fff"/></svg>
<div class="t" style="left:981.00px;top:1355.90px;font-size:26px;line-height:26px;color:#606060;font-weight:400;font-family:'Liberation Sans', sans-serif;letter-spacing:-0.922px;">22</div>
<div class="t" style="left:1136.60px;top:1355.90px;font-size:26px;line-height:26px;color:#606060;font-weight:400;font-family:'Liberation Sans', sans-serif;letter-spacing:0px;">0</div>
<div class="t" style="left:1284.00px;top:1355.90px;font-size:26px;line-height:26px;color:#606060;font-weight:400;font-family:'Liberation Sans', sans-serif;letter-spacing:-1.517px;">3,914.36</div>
<div class="t" style="left:1468.50px;top:1355.90px;font-size:26px;line-height:26px;color:#606060;font-weight:400;font-family:'Liberation Sans', sans-serif;letter-spacing:-1.700px;">1,388.41</div>
<div class="t" style="left:1644.30px;top:1355.90px;font-size:26px;line-height:26px;color:#606060;font-weight:400;font-family:'Liberation Sans', sans-serif;letter-spacing:-1.517px;">2,801.95</div>
<div class="t" style="left:1823.80px;top:1355.90px;font-size:26px;line-height:26px;color:#606060;font-weight:400;font-family:'Liberation Sans', sans-serif;letter-spacing:-0.870px;">2.96</div>
<div class="t" style="left:2023.00px;top:1355.90px;font-size:26px;line-height:26px;color:#606060;font-weight:400;font-family:'Liberation Sans', sans-serif;letter-spacing:-0.746px;">4,257.32</div>
<div class="t" style="left:2273.80px;top:1355.90px;font-size:26px;line-height:26px;color:#606060;font-weight:400;font-family:'Liberation Sans', sans-serif;letter-spacing:-0.746px;">6,693.47</div>
<div class="t" style="left:2559.00px;top:1355.90px;font-size:26px;line-height:26px;color:#606060;font-weight:400;font-family:'Liberation Sans', sans-serif;letter-spacing:-0.870px;">0.06</div>
<div style="position:absolute;left:509px;top:1454px;width:2316px;height:1px;background:#efefef"></div>
<div class="t" style="left:524.00px;top:1412.30px;font-size:26px;line-height:26px;color:#606060;font-weight:400;font-family:'Liberation Sans', sans-serif;letter-spacing:-1.083px;">Jun 27, 2024 11:43:00</div>
<svg style="position:absolute;left:873px;top:1405px;" width="29" height="29" viewBox="0 0 29 29"><circle cx="14.5" cy="14.5" r="14.4" fill="#f2c12e"/><path d="M14.5 8.2 L21.6 20.8 L7.4 20.8 Z" fill="none" stroke="#fff" stroke-width="1.9" stroke-linejoin="round"/><path d="M14.5 12.6 V17.2" stroke="#fff" stroke-width="1.4"/><circle cx="14.5" cy="18.9" r="0.8" fill="#fff"/></svg>
<div class="t" style="left:981.00px;top:1412.30px;font-size:26px;line-height:26px;color:#606060;font-weight:400;font-family:'Liberation Sans', sans-serif;letter-spacing:-1.700px;">17</div>
<div class="t" style="left:1136.60px;top:1412.30px;font-size:26px;line-height:26px;color:#606060;font-weight:400;font-family:'Liberation Sans', sans-serif;letter-spacing:0px;">0</div>
<div class="t" style="left:1284.00px;top:1412.30px;font-size:26px;line-height:26px;color:#606060;font-weight:400;font-family:'Liberation Sans', sans-serif;letter-spacing:-1.517px;">2,305.18</div>
<div class="t" style="left:1468.50px;top:1412.30px;font-size:26px;line-height:26px;color:#606060;font-weight:400;font-family:'Liberation Sans', sans-serif;letter-spacing:-0.706px;">232.59</div>
<div class="t" style="left:1644.30px;top:1412.30px;font-size:26px;line-height:26px;color:#606060;font-weight:400;font-family:'Liberation Sans', sans-serif;letter-spacing:-0.706px;">439.35</div>
<div class="t" style="left:1823.80px;top:1412.30px;font-size:26px;line-height:26px;color:#606060;font-weight:400;font-family:'Liberation Sans', sans-serif;letter-spacing:-0.870px;">2.85</div>
<div class="t" style="left:2023.00px;top:1412.30px;font-size:26px;line-height:26px;color:#606060;font-weight:400;font-family:'Liberation Sans', sans-serif;letter-spacing:-0.792px;">3,792.5</div>
<div class="t" style="left:2273.80px;top:1412.30px;font-size:26px;line-height:26px;color:#606060;font-weight:400;font-family:'Liberation Sans', sans-serif;letter-spacing:-0.746px;">4,922.47</div>
<div class="t" style="left:2559.00px;top:1412.30px;font-size:26px;line-height:26px;color:#606060;font-weight:400;font-family:'Liberation Sans', sans-serif;letter-spacing:-0.870px;">0.05</div>
<div style="position:absolute;left:509px;top:1510px;width:2316px;height:1px;background:#efefef"></div>
<div class="t" style="left:524.00px;top:1468.70px;font-size:26px;line-height:26px;color:#606060;font-weight:400;font-family:'Liberation Sans', sans-serif;letter-spacing:-1.083px;">Jun 27, 2024 11:42:00</div>
<svg style="position:absolute;left:873px;top:1461px;" width="29" height="29" viewBox="0 0 29 29"><circle cx="14.5" cy="14.5" r="14.4" fill="#f2c12e"/><path d="M14.5 8.2 L21.6 20.8 L7.4 20.8 Z" fill="none" stroke="#fff" stroke-width="1.9" stroke-linejoin="round"/><path d="M14.5 12.6 V17.2" stroke="#fff" stroke-width="1.4"/><circle cx="14.5" cy="18.9" r="0.8" fill="#fff"/></svg>
<div class="t" style="left:981.00px;top:1468.70px;font-size:26px;line-height:26px;color:#606060;font-weight:400;font-family:'Liberation Sans', sans-serif;letter-spacing:-0.922px;">22</div>
<div class="t" style="left:1136.60px;top:1468.70px;font-size:26px;line-height:26px;color:#606060;font-weight:400;font-family:'Liberation Sans', sans-serif;letter-spacing:0px;">0</div>
<div class="t" style="left:1284.00px;top:1468.70px;font-size:26px;line-height:26px;color:#606060;font-weight:400;font-family:'Liberation Sans', sans-serif;letter-spacing:-0.746px;">2,537.78</div>
<div class="t" style="left:1468.50px;top:1468.70px;font-size:26px;line-height:26px;color:#606060;font-weight:400;font-family:'Liberation Sans', sans-serif;letter-spacing:-0.770px;">88.04</div>
<div class="t" style="left:1644.30px;top:1468.70px;font-size:26px;line-height:26px;color:#606060;font-weight:400;font-family:'Liberation Sans', sans-serif;letter-spacing:-1.700px;">184.04</div>
<div class="t" style="left:2023.00px;top:1468.70px;font-size:26px;line-height:26px;color:#606060;font-weight:400;font-family:'Liberation Sans', sans-serif;letter-spacing:-0.770px;">4,746</div>
<div class="t" style="left:2273.80px;top:1468.70px;font-size:26px;line-height:26px;color:#606060;font-weight:400;font-family:'Liberation Sans', sans-serif;letter-spacing:-0.770px;">4,754</div>
</div>
<div style="position:absolute;left:2825px;top:220px;width:7px;height:276px;background:#646f8b;border-radius:0 0 4px 4px"></div>
<div style="position:absolute;left:1219px;top:1479px;width:1605px;height:7px;background:#646f8b;border-radius:4px"></div>
<svg style="position:absolute;left:512px;top:154px;" width="21" height="22" viewBox="0 0 21 22"><path d="M1.5 2 H19.5 L12.5 11 V20 L8.5 17 V11 Z" fill="none" stroke="#222" stroke-width="1.8" stroke-linejoin="round"/></svg>
<div class="t" style="left:553.00px;top:157.30px;font-size:22px;line-height:22px;color:#111;font-weight:400;font-family:'Liberation Sans', sans-serif;letter-spacing:-0.943px;">From</div>
<div style="position:absolute;left:607.5px;top:139px;width:362.5px;height:57.5px;box-sizing:border-box;border:1.5px solid #c6c6c6;border-radius:7px;background:#fff"></div>
<div class="t" style="left:628.00px;top:153.05px;font-size:27px;line-height:27px;color:#111;font-weight:400;font-family:'Liberation Sans', sans-serif;letter-spacing:1.000px;">27/06/</div>
<div class="t" style="left:714.70px;top:153.05px;font-size:27px;line-height:27px;color:#7b7b7b;font-weight:400;font-family:'Liberation Sans', sans-serif;letter-spacing:-0.359px;">2024</div>
<div class="t" style="left:777.30px;top:153.05px;font-size:27px;line-height:27px;color:#111;font-weight:400;font-family:'Liberation Sans', sans-serif;letter-spacing:0px;">,</div>
<div class="t" style="left:791.00px;top:153.05px;font-size:27px;line-height:27px;color:#111;font-weight:400;font-family:'Liberation Sans', sans-serif;letter-spacing:-0.145px;">12:00</div>
<div class="t" style="left:868.70px;top:153.05px;font-size:27px;line-height:27px;color:#111;font-weight:400;font-family:'Liberation Sans', sans-serif;letter-spacing:-1.700px;">AM</div>
<svg style="position:absolute;left:925px;top:156px;" width="20" height="21" viewBox="0 0 20 21"><rect x="1.2" y="3.2" width="17.6" height="16.6" rx="2" fill="none" stroke="#111" stroke-width="2.2"/><rect x="1" y="3" width="18" height="5" fill="#111"/><rect x="4" y="0" width="2.4" height="4" fill="#111"/><rect x="13.6" y="0" width="2.4" height="4" fill="#111"/></svg>
<div class="t" style="left:992.70px;top:156.45px;font-size:23px;line-height:23px;color:#111;font-weight:400;font-family:'Liberation Sans', sans-serif;letter-spacing:-1.700px;">To</div>
<div style="position:absolute;left:1020px;top:139px;width:360px;height:57.5px;box-sizing:border-box;border:1.5px solid #c6c6c6;border-radius:7px;background:#fff"></div>
<div class="t" style="left:1041.40px;top:153.05px;font-size:27px;line-height:27px;color:#111;font-weight:400;font-family:'Liberation Sans', sans-serif;letter-spacing:1.000px;">27/06/</div>
<div class="t" style="left:1128.10px;top:153.05px;font-size:27px;line-height:27px;color:#111;font-weight:400;font-family:'Liberation Sans', sans-serif;letter-spacing:-0.359px;">2024</div>
<div class="t" style="left:1190.70px;top:153.05px;font-size:27px;line-height:27px;color:#111;font-weight:400;font-family:'Liberation Sans', sans-serif;letter-spacing:0px;">,</div>
<div class="t" style="left:1204.40px;top:153.05px;font-size:27px;line-height:27px;color:#111;font-weight:400;font-family:'Liberation Sans', sans-serif;letter-spacing:-0.145px;">12:09</div>
<div class="t" style="left:1282.10px;top:153.05px;font-size:27px;line-height:27px;color:#111;font-weight:400;font-family:'Liberation Sans', sans-serif;letter-spacing:-1.700px;">PM</div>
<svg style="position:absolute;left:1335.5px;top:156px;" width="20" height="21" viewBox="0 0 20 21"><rect x="1.2" y="3.2" width="17.6" height="16.6" rx="2" fill="none" stroke="#111" stroke-width="2.2"/><rect x="1" y="3" width="18" height="5" fill="#111"/><rect x="4" y="0" width="2.4" height="4" fill="#111"/><rect x="13.6" y="0" width="2.4" height="4" fill="#111"/></svg>
<div style="position:absolute;left:1407.4px;top:139.2px;width:254.3px;height:57.3px;box-sizing:border-box;border:1.5px solid #c8c8c8;border-radius:7px;background:#fff"></div>
<svg style="position:absolute;left:1428.5px;top:157.5px;" width="21" height="21" viewBox="0 0 21 21"><circle cx="10.5" cy="10.5" r="10.4" fill="#b7b8bb"/><path d="M10.5 4.5 L15.5 10 H12.3 V15.5 H8.7 V10 H5.5 Z" fill="#fff"/></svg>
<div class="t" style="left:1461.40px;top:152.65px;font-size:27px;line-height:27px;color:#111;font-weight:400;font-family:'Liberation Sans', sans-serif;letter-spacing:-0.825px;">Availability</div>
<svg style="position:absolute;left:1607px;top:150px;" width="36" height="36" viewBox="0 0 36 36"><circle cx="18" cy="18" r="18" fill="#8ab04a"/></svg>
<svg style="position:absolute;left:1619px;top:156px;" width="12" height="20" viewBox="0 0 12 20"><path d="M2.6 5.6 L7 2.4 V18" fill="none" stroke="#fff" stroke-width="2.5" stroke-linejoin="miter"/></svg>
<div style="position:absolute;left:2535.2px;top:139.1px;width:219.5px;height:59.7px;background:#e8e9eb;border-radius:8px"></div>
<div class="t" style="left:2558.30px;top:154.05px;font-size:27px;line-height:27px;color:#111;font-weight:400;font-family:'Liberation Sans', sans-serif;letter-spacing:-0.918px;">Download CSV</div>
<div style="position:absolute;left:2764.2px;top:139.1px;width:67.6px;height:62px;background:#e8e9eb;border-radius:8px"></div>
<svg style="position:absolute;left:2782px;top:156px;" width="32" height="25" viewBox="0 0 32 25"><rect x="0" y="0" width="32" height="25" fill="#ababab"/><rect x="1.5" y="6.2" width="6" height="3.6" fill="#f0f0f0"/><rect x="17" y="6.2" width="6" height="3.6" fill="#f0f0f0"/><rect x="24.5" y="6.2" width="6" height="3.6" fill="#f0f0f0"/><rect x="1.5" y="10.9" width="6" height="3.6" fill="#f0f0f0"/><rect x="17" y="10.9" width="6" height="3.6" fill="#f0f0f0"/><rect x="24.5" y="10.9" width="6" height="3.6" fill="#f0f0f0"/><rect x="1.5" y="15.6" width="6" height="3.6" fill="#f0f0f0"/><rect x="17" y="15.6" width="6" height="3.6" fill="#f0f0f0"/><rect x="24.5" y="15.6" width="6" height="3.6" fill="#f0f0f0"/><rect x="1.5" y="20.3" width="6" height="3.6" fill="#f0f0f0"/><rect x="17" y="20.3" width="6" height="3.6" fill="#f0f0f0"/><rect x="24.5" y="20.3" width="6" height="3.6" fill="#f0f0f0"/><rect x="9" y="5" width="6.5" height="20" fill="#ababab"/></svg>
<div style="position:absolute;left:1351px;top:215px;width:392px;height:307px;background:#fff;border-radius:8px;box-shadow:0 6px 18px rgba(0,0,0,0.18), 0 0 2px rgba(0,0,0,0.12)"></div>
<svg style="position:absolute;left:1525px;top:199px;" width="36" height="19" viewBox="0 0 36 19"><path d="M0 18 L18 1 L36 18" fill="#fff" stroke="#e2e2e2" stroke-width="1.2"/><rect x="0" y="17" width="36" height="3" fill="#fff"/></svg>
<svg style="position:absolute;left:1426px;top:239.8px;" width="29" height="29" viewBox="0 0 29 29"><circle cx="14.5" cy="14.5" r="14.5" fill="#3ec97a"/><path d="M14.5 6.6 L21.1 13.3 H17.4 V21.4 H11.6 V13.3 H7.9 Z" fill="#fff"/></svg>
<div class="t" style="left:1472.80px;top:240.35px;font-size:27px;line-height:27px;color:#111;font-weight:400;font-family:'Liberation Sans', sans-serif;letter-spacing:-1.700px;">Up</div>
<svg style="position:absolute;left:1426px;top:294.0px;" width="29" height="29" viewBox="0 0 29 29"><circle cx="14.5" cy="14.5" r="14.5" fill="#e5503c"/><path d="M14.5 22.4 L21.1 15.7 H17.4 V7.6 H11.6 V15.7 H7.9 Z" fill="#fff"/></svg>
<div class="t" style="left:1472.80px;top:294.55px;font-size:27px;line-height:27px;color:#111;font-weight:400;font-family:'Liberation Sans', sans-serif;letter-spacing:-1.700px;">Down</div>
<svg style="position:absolute;left:1426px;top:348.1px;" width="29" height="29" viewBox="0 0 29 29"><circle cx="14.5" cy="14.5" r="14.5" fill="#f2c12e"/><path d="M14.5 7.8 L21.8 20.6 L7.2 20.6 Z" fill="none" stroke="#fff" stroke-width="1.9" stroke-linejoin="round"/><path d="M14.5 12.4 V17" stroke="#fff" stroke-width="1.4"/><circle cx="14.5" cy="18.7" r="0.8" fill="#fff"/></svg>
<div class="t" style="left:1472.80px;top:348.65px;font-size:27px;line-height:27px;color:#111;font-weight:400;font-family:'Liberation Sans', sans-serif;letter-spacing:-0.758px;">Trouble</div>
<svg style="position:absolute;left:1426px;top:401.9px;" width="29" height="29" viewBox="0 0 29 29"><circle cx="14.5" cy="14.5" r="14.5" fill="#eb6537"/><rect x="12.7" y="6" width="3.6" height="12" rx="1.2" fill="#fff"/><rect x="12.9" y="19.6" width="3.2" height="3.4" rx="1" fill="#fff"/></svg>
<div class="t" style="left:1472.80px;top:402.45px;font-size:27px;line-height:27px;color:#111;font-weight:400;font-family:'Liberation Sans', sans-serif;letter-spacing:-0.788px;">Critical</div>
<svg style="position:absolute;left:1387px;top:354px;" width="22" height="18" viewBox="0 0 22 18"><path d="M2.2 9.5 L7.5 14.8 L19 3.2" fill="none" stroke="#111" stroke-width="3.2" stroke-linecap="round" stroke-linejoin="round"/></svg>
<div style="position:absolute;left:1367px;top:471px;width:359px;height:1px;background:#e5e5e5"></div>
<div class="t" style="left:1657.00px;top:484.30px;font-size:22px;line-height:22px;color:#4a84c2;font-weight:400;font-family:'Liberation Sans', sans-serif;letter-spacing:-1.371px;">Reset</div>
<div class="t" style="left:2598.00px;top:15.00px;font-size:24px;line-height:24px;color:#eeeeee;font-weight:400;font-family:'Liberation Sans', sans-serif;letter-spacing:-1.700px;">Zoho Logs :</div>
<div style="position:absolute;left:2716px;top:18px;width:40px;height:26px;background:#c9cacd;border-radius:13px"></div>
<div style="position:absolute;left:2717.5px;top:19px;width:24px;height:24px;background:#ffffff;border-radius:50%"></div>
<div class="t" style="left:2818.50px;top:18.50px;font-size:30px;line-height:30px;color:#ffffff;font-weight:400;font-family:'Liberation Sans', sans-serif;letter-spacing:0px;transform:scaleX(0.82);transform-origin:0 0">X</div>
<div style="position:absolute;left:108px;top:24.3px;width:341.6px;height:47.3px;box-sizing:border-box;background:#2f3d4c;border:1.5px solid #c2c7cc;border-radius:7px"></div>
<div class="t" style="left:117.00px;top:31.05px;font-size:27px;line-height:27px;color:#e9ecef;font-weight:400;font-family:'Liberation Sans', sans-serif;letter-spacing:-1.440px;">Site24x7</div>
<div style="position:absolute;left:212.5px;top:34px;width:135px;height:22px;background:linear-gradient(90deg,#4a5663 0%,#56616d 55%,#4e5a66 85%,rgba(78,90,102,0) 100%);filter:blur(0.8px)"></div>
<svg style="position:absolute;left:421px;top:44px;" width="16" height="9" viewBox="0 0 16 9"><path d="M0 0 H16 L8 9 Z" fill="#5e646b"/></svg>
<div class="t" style="left:108.00px;top:90.30px;font-size:20px;line-height:20px;color:#f0f0f0;font-weight:400;font-family:'Liberation Sans', sans-serif;letter-spacing:-1.432px;">No Tags added</div>
<svg style="position:absolute;left:231px;top:86px;" width="22" height="22" viewBox="0 0 22 22"><path d="M11 3 L19 2.5 L19.5 10.5 L10 20 L2 12 Z" fill="none" stroke="#c8c8c8" stroke-width="1.3" stroke-linejoin="round"/><circle cx="15.5" cy="6.5" r="1.6" fill="none" stroke="#c8c8c8" stroke-width="1.1"/></svg>
<div class="t" style="left:145.60px;top:155.05px;font-size:25px;line-height:25px;color:#e4e6e9;font-weight:400;font-family:'Liberation Sans', sans-serif;letter-spacing:-1.161px;">Summary</div>
<div class="t" style="left:147.70px;top:219.88px;font-size:24px;line-height:24px;color:#f2f2f2;font-weight:400;font-family:'Liberation Serif', serif;letter-spacing:-0.995px;white-space:pre">Geographic</div>
<div class="t" style="left:145.60px;top:280.55px;font-size:25px;line-height:25px;color:#e4e6e9;font-weight:400;font-family:'Liberation Sans', sans-serif;letter-spacing:-1.700px;">ISP</div>
<div class="t" style="left:146.00px;top:343.75px;font-size:25px;line-height:25px;color:#e4e6e9;font-weight:400;font-family:'Liberation Sans', sans-serif;letter-spacing:-1.115px;">Browser</div>
<div class="t" style="left:146.00px;top:406.45px;font-size:25px;line-height:25px;color:#e4e6e9;font-weight:400;font-family:'Liberation Sans', sans-serif;letter-spacing:-1.211px;">Device Type</div>
<div class="t" style="left:146.00px;top:469.75px;font-size:25px;line-height:25px;color:#e4e6e9;font-weight:400;font-family:'Liberation Sans', sans-serif;letter-spacing:-1.700px;">Web Pages</div>
<div class="t" style="left:146.00px;top:533.75px;font-size:25px;line-height:25px;color:#e4e6e9;font-weight:400;font-family:'Liberation Sans', sans-serif;letter-spacing:-0.963px;">Waterfall Analysis</div>
<div class="t" style="left:146.00px;top:596.45px;font-size:25px;line-height:25px;color:#e4e6e9;font-weight:400;font-family:'Liberation Sans', sans-serif;letter-spacing:-1.288px;">Web Vitals</div>
<div class="t" style="left:141.00px;top:659.75px;font-size:25px;line-height:25px;color:#e4e6e9;font-weight:400;font-family:'Liberation Sans', sans-serif;letter-spacing:-1.681px;">User Sessions</div>
<div class="t" style="left:146.00px;top:722.75px;font-size:25px;line-height:25px;color:#e4e6e9;font-weight:400;font-family:'Liberation Sans', sans-serif;letter-spacing:-0.900px;">Filterable Performance</div>
<div class="t" style="left:148.50px;top:789.78px;font-size:24px;line-height:24px;color:#f2f2f2;font-weight:400;font-family:'Liberation Serif', serif;letter-spacing:-1.266px;white-space:pre">Events</div>
<div class="t" style="left:146.00px;top:849.25px;font-size:25px;line-height:25px;color:#e4e6e9;font-weight:400;font-family:'Liberation Sans', sans-serif;letter-spacing:-1.463px;">Resources</div>
<div class="t" style="left:146.00px;top:911.75px;font-size:25px;line-height:25px;color:#e4e6e9;font-weight:400;font-family:'Liberation Sans', sans-serif;letter-spacing:-1.399px;">Ajax calls</div>
<div class="t" style="left:148.50px;top:978.38px;font-size:24px;line-height:24px;color:#f2f2f2;font-weight:400;font-family:'Liberation Serif', serif;letter-spacing:-0.527px;white-space:pre">JavaScript  Errors</div>
<svg style="position:absolute;left:435px;top:217px;" width="11" height="20" viewBox="0 0 11 20"><path d="M0 0 L10.5 10 L0 20 Z" fill="#8d939b"/></svg>
<svg style="position:absolute;left:435px;top:785px;" width="11" height="20" viewBox="0 0 11 20"><path d="M0 0 L10.5 10 L0 20 Z" fill="#8d939b"/></svg>
<svg style="position:absolute;left:435px;top:975px;" width="11" height="20" viewBox="0 0 11 20"><path d="M0 0 L10.5 10 L0 20 Z" fill="#8d939b"/></svg>
<div style="position:absolute;left:90px;top:1019px;width:378px;height:63px;background:#253240"></div>
<div style="position:absolute;left:102.2px;top:1024.3px;width:281.3px;height:63.5px;box-sizing:border-box;border:5.5px solid #1036f7;background:#2a3744"></div>
<div class="t" style="left:152.70px;top:1038.83px;font-size:25.5px;line-height:25.5px;color:#ffffff;font-weight:400;font-family:'Liberation Sans', sans-serif;letter-spacing:-1.206px;">Data Collection Stats</div>
<svg style="position:absolute;left:115.9px;top:1040px;" width="26" height="20" viewBox="0 0 26 20"><rect x="0" y="0" width="26" height="20" fill="#a9a9a9"/><rect x="1.0" y="5.1" width="5.0" height="2.6" fill="#1f2d3b"/><rect x="13.1" y="5.1" width="4.8" height="2.6" fill="#1f2d3b"/><rect x="19.0" y="5.1" width="5.6" height="2.6" fill="#1f2d3b"/><rect x="1.0" y="8.9" width="5.0" height="2.4" fill="#1f2d3b"/><rect x="13.1" y="8.9" width="4.8" height="2.4" fill="#1f2d3b"/><rect x="19.0" y="8.9" width="5.6" height="2.4" fill="#1f2d3b"/><rect x="1.0" y="12.6" width="5.0" height="2.4" fill="#1f2d3b"/><rect x="13.1" y="12.6" width="4.8" height="2.4" fill="#1f2d3b"/><rect x="19.0" y="12.6" width="5.6" height="2.4" fill="#1f2d3b"/><rect x="1.0" y="16.1" width="5.0" height="2.7" fill="#1f2d3b"/><rect x="13.1" y="16.1" width="4.8" height="2.7" fill="#1f2d3b"/><rect x="19.0" y="16.1" width="5.6" height="2.7" fill="#1f2d3b"/></svg>
<svg style="position:absolute;left:117.8px;top:157px;" width="15" height="19" viewBox="0 0 15 19"><path d="M0.8 0.8 H9.5 L14.2 5.5 V18.2 H0.8 Z" fill="#e6e8ea"/><path d="M9.5 0.8 V5.5 H14.2" fill="none" stroke="#172330" stroke-width="1"/><rect x="3" y="8" width="9" height="1.1" fill="#172330"/><rect x="3" y="10.5" width="9" height="1.1" fill="#172330"/><rect x="3" y="13" width="9" height="1.1" fill="#172330"/><rect x="3" y="15.5" width="9" height="1.1" fill="#172330"/></svg>
<svg style="position:absolute;left:118.4px;top:221px;" width="14" height="19" viewBox="0 0 14 19"><path d="M7 18.5 C3 13 0.6 9.5 0.6 6.6 A6.4 6.4 0 0 1 13.4 6.6 C13.4 9.5 11 13 7 18.5 Z" fill="#e6e8ea"/><circle cx="7" cy="6.6" r="2.4" fill="#172330"/></svg>
<svg style="position:absolute;left:114.6px;top:282px;" width="20" height="20" viewBox="0 0 20 20"><circle cx="5.5" cy="3.5" r="3.2" fill="#e6e8ea"/><path d="M1 19.5 V10 Q1 7.5 4 7.5 H7 L11 12 L17 10 L18 12.5 L10.5 16 L7 13 V19.5 Z" fill="#e6e8ea"/><circle cx="16.5" cy="4.5" r="3" fill="none" stroke="#e6e8ea" stroke-width="1"/><path d="M13.5 4.5 H19.5" stroke="#e6e8ea" stroke-width="0.8"/></svg>
<svg style="position:absolute;left:114px;top:346.5px;" width="22" height="16" viewBox="0 0 22 16"><rect x="0.5" y="0.5" width="21" height="15.5" fill="#e6e8ea"/><rect x="0.5" y="2.6" width="21" height="1" fill="#172330"/><rect x="6" y="0.5" width="1" height="2" fill="#172330"/></svg>
<svg style="position:absolute;left:114px;top:408px;" width="22" height="20" viewBox="0 0 22 20"><rect x="1" y="1" width="20" height="12.5" fill="none" stroke="#e6e8ea" stroke-width="2"/><path d="M7 19.5 L8.5 14.5 H13.5 L15 19.5 Z" fill="#e6e8ea"/></svg>
<svg style="position:absolute;left:114px;top:472px;" width="22" height="18" viewBox="0 0 22 18"><rect x="1" y="1" width="20" height="15" rx="1.5" fill="none" stroke="#e6e8ea" stroke-width="1.6"/><rect x="1" y="1" width="20" height="4" fill="#e6e8ea"/><circle cx="16.5" cy="13" r="4" fill="#e6e8ea" stroke="#172330" stroke-width="1"/><path d="M14.5 12 L18 14" stroke="#172330" stroke-width="1"/></svg>
<svg style="position:absolute;left:115.5px;top:536px;" width="19" height="19" viewBox="0 0 19 19"><rect x="1" y="1" width="17" height="17" rx="1.5" fill="none" stroke="#e6e8ea" stroke-width="1.6"/><text x="9.5" y="13.5" font-size="10" text-anchor="middle" fill="#e6e8ea" font-family="Liberation Mono">{}</text></svg>
<svg style="position:absolute;left:114px;top:598.7px;" width="22" height="19" viewBox="0 0 22 19"><circle cx="9.5" cy="9.5" r="8.6" fill="none" stroke="#e6e8ea" stroke-width="1.6"/><ellipse cx="9.5" cy="9.5" rx="3.8" ry="8.6" fill="none" stroke="#e6e8ea" stroke-width="1.3"/><path d="M1 9.5 H18 M2.5 5 H16.5" stroke="#e6e8ea" stroke-width="1.3"/><path d="M3 14 Q10 18 21 12 L18 10 L21.5 9 L21 14" fill="#e6e8ea" stroke="#e6e8ea" stroke-width="1.5"/></svg>
<svg style="position:absolute;left:115px;top:663.6px;" width="16" height="15.5" viewBox="0 0 16 15.5"><circle cx="8" cy="4" r="3.8" fill="#e6e8ea"/><path d="M0.5 15.3 Q0.5 8.5 8 8.5 Q15.5 8.5 15.5 15.3 Z" fill="#e6e8ea"/></svg>
<svg style="position:absolute;left:116px;top:726px;" width="18" height="18" viewBox="0 0 18 18"><path d="M1 1 H17 L11 9 V17 L7 14.5 V9 Z" fill="none" stroke="#e6e8ea" stroke-width="1.6" stroke-linejoin="round"/></svg>
<svg style="position:absolute;left:115px;top:790px;" width="21" height="18" viewBox="0 0 21 18"><path d="M10.5 0.3 L20.6 3.6 L10.5 6.9 L0.4 3.6 Z" fill="#e6e8ea"/><path d="M0.4 5.4 L10.5 8.7 L20.6 5.4 V8.0 L10.5 11.3 L0.4 8.0 Z" fill="#e6e8ea"/><path d="M0.4 9.2 L10.5 12.5 L20.6 9.2 V11.799999999999999 L10.5 15.1 L0.4 11.799999999999999 Z" fill="#e6e8ea"/><path d="M0.4 13.0 L10.5 16.3 L20.6 13.0 V15.6 L10.5 18.9 L0.4 15.6 Z" fill="#e6e8ea"/></svg>
<svg style="position:absolute;left:114px;top:849px;" width="22" height="22" viewBox="0 0 22 22"><path d="M1 0 V21 H22" fill="none" stroke="#e6e8ea" stroke-width="1"/><path d="M3 18 L7 10 L11 15 L15 6 L19 12" fill="none" stroke="#e6e8ea" stroke-width="1.2"/><circle cx="13" cy="11" r="4.5" fill="none" stroke="#e6e8ea" stroke-width="1.2"/><path d="M16 14 L20 18" stroke="#e6e8ea" stroke-width="1.5"/></svg>
<svg style="position:absolute;left:115.5px;top:914px;" width="20" height="19" viewBox="0 0 20 19"><path d="M2 9.5 Q2 4.2 7.5 4.2 H16.5" fill="none" stroke="#e6e8ea" stroke-width="1.7"/><path d="M13 1 L16.8 4.2 L13 7.4" fill="none" stroke="#e6e8ea" stroke-width="1.7" stroke-linejoin="round"/><path d="M18 9.5 Q18 14.8 12.5 14.8 H3.5" fill="none" stroke="#e6e8ea" stroke-width="1.7"/><path d="M7 11.6 L3.2 14.8 L7 18" fill="none" stroke="#e6e8ea" stroke-width="1.7" stroke-linejoin="round"/></svg>
<svg style="position:absolute;left:115.5px;top:980px;" width="19" height="17" viewBox="0 0 19 17"><path d="M9.5 1.5 L18 16 H1 Z" fill="none" stroke="#e6e8ea" stroke-width="1.8" stroke-linejoin="round"/><path d="M9.5 6.5 V11" stroke="#e6e8ea" stroke-width="1.8"/><circle cx="9.5" cy="13.3" r="1" fill="#e6e8ea"/></svg>
<div class="t" style="left:21.20px;top:60.50px;font-size:18px;line-height:18px;color:#f1f1f1;font-weight:400;font-family:'Liberation Sans', sans-serif;letter-spacing:-0.139px;">Home</div>
<div class="t" style="left:17.00px;top:147.70px;font-size:18px;line-height:18px;color:#f1f1f1;font-weight:400;font-family:'Liberation Sans', sans-serif;letter-spacing:-0.003px;">Alarms</div>
<div class="t" style="left:25.50px;top:235.20px;font-size:18px;line-height:18px;color:#f1f1f1;font-weight:400;font-family:'Liberation Sans', sans-serif;letter-spacing:1.000px;">Web</div>
<div class="t" style="left:25.50px;top:323.40px;font-size:18px;line-height:18px;color:#f1f1f1;font-weight:400;font-family:'Liberation Sans', sans-serif;letter-spacing:-0.008px;">APM</div>
<div class="t" style="left:19.50px;top:410.50px;font-size:18px;line-height:18px;color:#f1f1f1;font-weight:400;font-family:'Liberation Sans', sans-serif;letter-spacing:-0.403px;">Server</div>
<div class="t" style="left:16.50px;top:497.30px;font-size:18px;line-height:18px;color:#f1f1f1;font-weight:400;font-family:'Liberation Sans', sans-serif;letter-spacing:-0.341px;">Plugins</div>
<div class="t" style="left:9.00px;top:578.90px;font-size:18px;line-height:18px;color:#f1f1f1;font-weight:400;font-family:'Liberation Sans', sans-serif;letter-spacing:-0.723px;">Database</div>
<div class="t" style="left:31.00px;top:672.30px;font-size:18px;line-height:18px;color:#f1f1f1;font-weight:400;font-family:'Liberation Sans', sans-serif;letter-spacing:-1.516px;">K8s</div>
<div class="t" style="left:13.00px;top:759.40px;font-size:18px;line-height:18px;color:#f1f1f1;font-weight:400;font-family:'Liberation Sans', sans-serif;letter-spacing:-0.403px;">VMware</div>
<div class="t" style="left:21.50px;top:847.70px;font-size:18px;line-height:18px;color:#f1f1f1;font-weight:400;font-family:'Liberation Sans', sans-serif;letter-spacing:-0.008px;">Cloud</div>
<div class="t" style="left:11.00px;top:934.40px;font-size:18px;line-height:18px;color:#f1f1f1;font-weight:400;font-family:'Liberation Sans', sans-serif;letter-spacing:0.331px;">Network</div>
<div class="t" style="left:26.00px;top:1028.40px;font-size:18px;line-height:18px;color:#f1f1f1;font-weight:400;font-family:'Liberation Sans', sans-serif;letter-spacing:-1.172px;">AWS</div>
<div class="t" style="left:26.00px;top:1115.70px;font-size:18px;line-height:18px;color:#8cb54a;font-weight:400;font-family:'Liberation Sans', sans-serif;letter-spacing:-1.500px;">RUM</div>
<div class="t" style="left:17.00px;top:1196.70px;font-size:18px;line-height:18px;color:#f1f1f1;font-weight:400;font-family:'Liberation Sans', sans-serif;letter-spacing:-0.333px;">Metrics</div>
<div class="t" style="left:13.00px;top:1283.70px;font-size:18px;line-height:18px;color:#f1f1f1;font-weight:400;font-family:'Liberation Sans', sans-serif;letter-spacing:-1.177px;">AppLogs</div>
<div class="t" style="left:23.40px;top:1433.55px;font-size:17px;line-height:17px;color:#c9c9c9;font-weight:400;font-family:'Liberation Sans', sans-serif;letter-spacing:-0.887px;">16:05</div>
<div class="t" style="left:8.80px;top:1456.55px;font-size:17px;line-height:17px;color:#c9c9c9;font-weight:400;font-family:'Liberation Sans', sans-serif;letter-spacing:-1.267px;">27 Jun, 24</div>
<svg style="position:absolute;left:30.8px;top:23.7px;" width="30" height="28" viewBox="0 0 30 28"><path d="M15 0.5 L29.5 13 L26.5 13 V27.5 H18.5 V18 H11.5 V27.5 H3.5 V13 H0.5 Z" fill="#f1f1f1"/></svg>
<svg style="position:absolute;left:33px;top:113.7px;" width="25" height="26" viewBox="0 0 25 26"><path d="M12.5 0.5 Q14 0.5 14 2.2 Q20.5 3.5 20.5 11 V16 Q20.5 19 24 20.5 V22 H1 V20.5 Q4.5 19 4.5 16 V11 Q4.5 3.5 11 2.2 Q11 0.5 12.5 0.5 Z" fill="#f1f1f1"/><path d="M9.5 23 Q12.5 26.5 15.5 23 Z" fill="#f1f1f1"/></svg>
<svg style="position:absolute;left:31px;top:200px;" width="28" height="28" viewBox="0 0 28 28"><circle cx="14" cy="14" r="13.8" fill="#f1f1f1"/><path d="M9.5 2.6 Q13 1.2 16.5 2.2 L18 4.5 L16.8 6.2 L18.5 8 L16 10.5 L14.5 12.6 L12.2 12 L10.2 10.5 L8.8 7.5 L8.2 4.5 Z" fill="#0b1925"/><path d="M17.5 3.2 L20.5 4.2 L19.2 6 Z" fill="#0b1925"/><path d="M13.2 14.5 L17.5 14.8 L19.8 17.5 L18.5 21 L15.8 24.5 L14 27 L13.5 22 L12.5 18 Z" fill="#0b1925"/></svg>
<svg style="position:absolute;left:28px;top:292px;" width="34" height="23" viewBox="0 0 34 23"><circle cx="8.6" cy="14.6" r="8" fill="#f1f1f1"/><circle cx="25.4" cy="14.6" r="8" fill="#f1f1f1"/><circle cx="12" cy="5.6" r="3.8" fill="#f1f1f1"/><circle cx="22" cy="5.6" r="3.8" fill="#f1f1f1"/><rect x="8.2" y="5.6" width="17.6" height="9" fill="#f1f1f1"/><circle cx="8.6" cy="14.6" r="5.4" fill="#0b1925"/><circle cx="25.4" cy="14.6" r="5.4" fill="#0b1925"/><circle cx="8.4" cy="14.8" r="4" fill="#f1f1f1"/><circle cx="9.6" cy="13.6" r="3.8" fill="#0b1925"/><circle cx="25.2" cy="14.8" r="4" fill="#f1f1f1"/><circle cx="26.4" cy="13.6" r="3.8" fill="#0b1925"/><circle cx="17" cy="9.6" r="2" fill="#0b1925"/></svg>
<svg style="position:absolute;left:32px;top:375px;" width="27" height="30" viewBox="0 0 27 30"><rect x="0.5" y="0.5" width="26" height="8.6" rx="4.3" fill="#f1f1f1"/><rect x="4" y="4.3" width="6" height="1.1" fill="#0b1925"/><circle cx="17" cy="4.8" r="1.6" fill="#0b1925"/><circle cx="21.5" cy="4.8" r="1.6" fill="#0b1925"/><rect x="0.5" y="10.7" width="26" height="8.6" rx="4.3" fill="#f1f1f1"/><rect x="4" y="14.5" width="6" height="1.1" fill="#0b1925"/><circle cx="17" cy="15.0" r="1.6" fill="#0b1925"/><circle cx="21.5" cy="15.0" r="1.6" fill="#0b1925"/><rect x="0.5" y="20.9" width="26" height="8.6" rx="4.3" fill="#f1f1f1"/><rect x="4" y="24.7" width="6" height="1.1" fill="#0b1925"/><circle cx="17" cy="25.2" r="1.6" fill="#0b1925"/><circle cx="21.5" cy="25.2" r="1.6" fill="#0b1925"/></svg>
<svg style="position:absolute;left:33.7px;top:454.7px;" width="24" height="38" viewBox="0 0 24 38"><rect x="5" y="0" width="3" height="9" fill="#f1f1f1"/><rect x="15.5" y="0" width="3" height="9" fill="#f1f1f1"/><path d="M1 9 H23 V15 Q23 24 13.5 26 V29 Q13.5 33 8 33.5 H1 V35 H8 Q15.5 34.5 15.5 29 V26" fill="#f1f1f1"/><path d="M1 9 H23 V15 Q23 25 12 25 Q1 25 1 15 Z" fill="#f1f1f1"/><path d="M13 25 V30 Q13 33.8 7 34 H0.5" fill="none" stroke="#f1f1f1" stroke-width="1.6"/></svg>
<svg style="position:absolute;left:34.7px;top:546.8px;" width="21" height="32" viewBox="0 0 21 32"><ellipse cx="10.5" cy="4" rx="10" ry="3.6" fill="#f1f1f1"/><path d="M0.5 6.2 Q10.5 11.2 20.5 6.2 V13.7 Q10.5 17.7 0.5 13.7 Z" fill="#f1f1f1"/><circle cx="11.5" cy="10.8" r="0.9" fill="#0b1925"/><circle cx="14.3" cy="10.600000000000001" r="0.9" fill="#0b1925"/><circle cx="17.1" cy="10.3" r="0.9" fill="#0b1925"/><path d="M0.5 15 Q10.5 20 20.5 15 V22.5 Q10.5 26.5 0.5 22.5 Z" fill="#f1f1f1"/><circle cx="11.5" cy="19.6" r="0.9" fill="#0b1925"/><circle cx="14.3" cy="19.4" r="0.9" fill="#0b1925"/><circle cx="17.1" cy="19.1" r="0.9" fill="#0b1925"/><path d="M0.5 23.8 Q10.5 28.8 20.5 23.8 V31.3 Q10.5 35.3 0.5 31.3 Z" fill="#f1f1f1"/><circle cx="11.5" cy="28.4" r="0.9" fill="#0b1925"/><circle cx="14.3" cy="28.200000000000003" r="0.9" fill="#0b1925"/><circle cx="17.1" cy="27.9" r="0.9" fill="#0b1925"/></svg>
<svg style="position:absolute;left:29px;top:633.7px;" width="34" height="33" viewBox="0 0 34 33"><path d="M17 0.5 L30.5 7 L33.5 21.5 L24.3 33 H9.7 L0.5 21.5 L3.5 7 Z" fill="#f1f1f1"/><circle cx="17" cy="17" r="7.5" fill="none" stroke="#0b1925" stroke-width="2"/><circle cx="17" cy="17" r="2.2" fill="#0b1925"/><path d="M17 17 L28.00 17.00" stroke="#0b1925" stroke-width="1.5"/><path d="M17 17 L23.86 25.60" stroke="#0b1925" stroke-width="1.5"/><path d="M17 17 L14.55 27.72" stroke="#0b1925" stroke-width="1.5"/><path d="M17 17 L7.09 21.77" stroke="#0b1925" stroke-width="1.5"/><path d="M17 17 L7.09 12.23" stroke="#0b1925" stroke-width="1.5"/><path d="M17 17 L14.55 6.28" stroke="#0b1925" stroke-width="1.5"/><path d="M17 17 L23.86 8.40" stroke="#0b1925" stroke-width="1.5"/></svg>
<svg style="position:absolute;left:32px;top:724.7px;" width="27" height="25" viewBox="0 0 27 25"><rect x="9" y="1.2" width="16.5" height="15" rx="1.5" fill="none" stroke="#f1f1f1" stroke-width="2.4"/><rect x="1.2" y="8.5" width="16.5" height="15" rx="1.5" fill="none" stroke="#f1f1f1" stroke-width="2.4"/></svg>
<svg style="position:absolute;left:28.4px;top:814px;" width="34" height="23" viewBox="0 0 34 23"><path d="M7 22.5 Q0.5 22.5 0.5 16.5 Q0.5 10.5 7 10.5 Q8 3 14.5 2 Q21 0.5 24 7 Q28 6 29 10.5 Q33.5 11.5 33.5 16.5 Q33.5 22.5 27 22.5 Z" fill="#f1f1f1"/></svg>
<svg style="position:absolute;left:30.8px;top:900px;" width="29" height="29" viewBox="0 0 29 29"><rect x="9" y="0.5" width="11" height="7.5" rx="1" fill="#f1f1f1"/><path d="M14.5 8 V12 M5 12 H24 M5 12 V16 M24 12 V16" stroke="#f1f1f1" stroke-width="1.4" fill="none"/><rect x="9.5" y="9.2" width="10" height="1.2" fill="#f1f1f1"/><rect x="0.5" y="16" width="10" height="8" rx="1" fill="#f1f1f1"/><rect x="18.5" y="16" width="10" height="8" rx="1" fill="#f1f1f1"/><path d="M5.5 24 V27.5 M2 27.8 H9 M23.5 24 V27.5 M20 27.8 H27" stroke="#f1f1f1" stroke-width="1.3"/></svg>
<svg style="position:absolute;left:29.7px;top:990px;" width="31" height="29" viewBox="0 0 31 29"><path d="M0.5 3.2 L7.5 0.2 L14.5 3.2 V11.7 L7.5 14.7 L0.5 11.7 Z" fill="#f1f1f1"/><path d="M0.5 3.2 L7.5 6.2 L14.5 3.2 M7.5 6.2 V14.7" stroke="#0b1925" stroke-width="1.2" fill="none"/><path d="M16.3 3.2 L23.3 0.2 L30.3 3.2 V11.7 L23.3 14.7 L16.3 11.7 Z" fill="#f1f1f1"/><path d="M16.3 3.2 L23.3 6.2 L30.3 3.2 M23.3 6.2 V14.7" stroke="#0b1925" stroke-width="1.2" fill="none"/><path d="M8.4 16.8 L15.4 13.8 L22.4 16.8 V25.3 L15.4 28.3 L8.4 25.3 Z" fill="#f1f1f1"/><path d="M8.4 16.8 L15.4 19.8 L22.4 16.8 M15.4 19.8 V28.3" stroke="#0b1925" stroke-width="1.2" fill="none"/></svg>
<svg style="position:absolute;left:30px;top:1078px;" width="30" height="30" viewBox="0 0 30 30"><circle cx="13.5" cy="13.5" r="13" fill="#8cb54a"/><path d="M13.5 0.5 V26.5 M0.5 13.5 H26.5 M2.5 7 H24.5 M2.5 20 H24.5" stroke="#0b1925" stroke-width="1.2"/><ellipse cx="13.5" cy="13.5" rx="6" ry="13" fill="none" stroke="#0b1925" stroke-width="1.2"/><circle cx="21" cy="21" r="5.5" fill="#0b1925" stroke="#cfcfcf" stroke-width="1.6"/><path d="M25 25 L29 29" stroke="#cfcfcf" stroke-width="2"/></svg>
<svg style="position:absolute;left:29.7px;top:1160px;" width="31" height="26" viewBox="0 0 31 26"><path d="M15.5 0.5 L30.5 6 L15.5 11.5 L0.5 6 Z" fill="#f1f1f1"/><path d="M0.5 10.5 L15.5 16 L30.5 10.5 V12.5 L15.5 18 L0.5 12.5 Z" fill="#f1f1f1"/><path d="M0.5 17 L15.5 22.5 L30.5 17 V19.5 L15.5 25 L0.5 19.5 Z" fill="#f1f1f1"/></svg>
<svg style="position:absolute;left:34px;top:1248px;" width="22" height="29" viewBox="0 0 22 29"><rect x="0.5" y="0.5" width="21" height="28" rx="1.5" fill="#f1f1f1"/><path d="M4 8 L8 4 L11 7 L14 3 L17 5" fill="none" stroke="#0b1925" stroke-width="1.3"/><path d="M3 15 H7 M3 18 H7 M3 21 H7" stroke="#0b1925" stroke-width="1"/><circle cx="13" cy="19" r="4.5" fill="none" stroke="#0b1925" stroke-width="1.8"/><path d="M16 22.5 L19.5 26" stroke="#0b1925" stroke-width="2"/></svg>
<svg style="position:absolute;left:31px;top:1335px;" width="28" height="28" viewBox="0 0 28 28"><path d="M14 0 V3" stroke="#f1f1f1" stroke-width="1.5"/><rect x="0.5" y="2.5" width="27" height="18" rx="1.5" fill="#f1f1f1"/><rect x="6" y="11" width="3.5" height="7" fill="#0b1925"/><rect x="11" y="13" width="3.5" height="5" fill="#0b1925"/><rect x="16" y="5" width="3.5" height="13" fill="#0b1925" opacity="0.6"/><path d="M14 20.5 V23 L7 27.5 M14 23 L21 27.5" stroke="#f1f1f1" stroke-width="1.8" fill="none"/></svg>
</body></html>
